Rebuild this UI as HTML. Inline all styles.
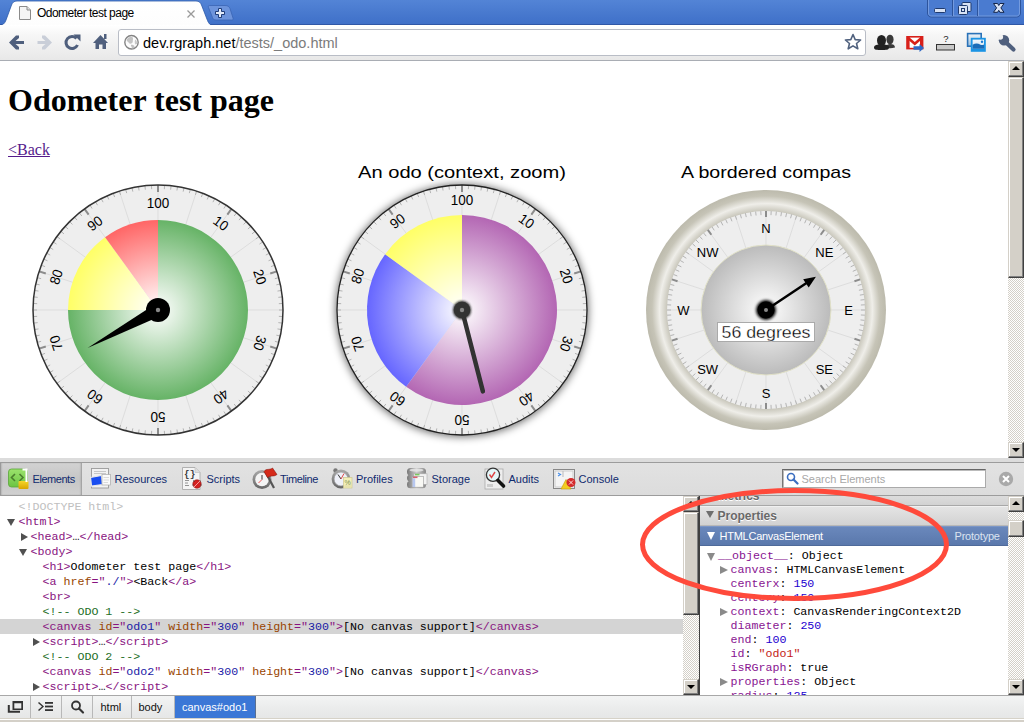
<!DOCTYPE html>
<html><head><meta charset="utf-8"><style>
*{box-sizing:border-box}
body{margin:0;width:1024px;height:722px;overflow:hidden;position:relative;background:#fff;font-family:"Liberation Sans",sans-serif}
.a{position:absolute}
.mono{font-family:"Liberation Mono",monospace}
</style></head><body>
<div class="a" style="left:0;top:0;width:1024px;height:25px;background:linear-gradient(#5384d6,#3f70c8);border-bottom:1px solid #2f57a6"></div>
<svg class="a" style="left:0;top:0" width="240" height="26" viewBox="0 0 240 26">
<defs><linearGradient id="tabg" x1="0" y1="0" x2="0" y2="1"><stop offset="0" stop-color="#fff"/><stop offset="1" stop-color="#fdfdfd"/></linearGradient></defs>
<path d="M-2,26 C3,25.5 5,23 6,20 L11.5,5 C12.5,2.5 14,1 17,1 L196,1 C199,1 200.5,2.5 201.5,5 L207.5,20.5 C208.5,23 210,25.5 214,26 Z" fill="url(#tabg)" stroke="#2a58a8" stroke-width="0.8"/>
<path d="M209.5,5.5 L225,5.5 C228,5.5 229,6.5 230,8.5 L233,18 C233.5,19.5 233,20 231.5,20 L216,20 C214,20 213,19 212.5,17.5 L208.5,7.5 C208,6 208.5,5.5 209.5,5.5 Z" fill="#6d94dc" stroke="#3a64b4" stroke-width="0.8"/>
<path d="M218.5,8.5 h3 v3 h3 v3 h-3 v3 h-3 v-3 h-3 v-3 h3 Z" fill="#e2eaf8" stroke="#1f3d78" stroke-width="1" stroke-linejoin="miter"/>
</svg>
<svg class="a" style="left:18px;top:5px" width="14" height="16" viewBox="0 0 14 16">
<path d="M1.5,1.5 H9 L12.5,5 V14.5 H1.5 Z" fill="#f4f4f4" stroke="#8a8a8a" stroke-width="1"/>
<path d="M9,1.5 V5 H12.5" fill="#e0e0e0" stroke="#8a8a8a" stroke-width="1"/>
</svg>
<div class="a" style="left:37px;top:6.3px;font-size:12px;line-height:15px;color:#000;white-space:nowrap;letter-spacing:-0.52px">Odometer test page</div>
<svg class="a" style="left:186px;top:8.5px" width="10" height="10" viewBox="0 0 10 10"><path d="M1.5,1.5 L8.5,8.5 M8.5,1.5 L1.5,8.5" stroke="#999" stroke-width="1.3"/></svg>
<svg class="a" style="left:926px;top:0" width="98" height="19" viewBox="0 0 98 19">
<path d="M1.5,-1 V13 C1.5,15.5 3,17 5.5,17 H90.5 C93,17 94.5,15.5 94.5,13 V-1" fill="#4a7bd0" stroke="#2d549c" stroke-width="1"/>
<path d="M2.5,-1 V13 C2.5,15 4,16 5.5,16 H90.5 C92,16 93.5,15 93.5,13 V-1" fill="none" stroke="#7fa3e2" stroke-width="0.8"/>
<line x1="26.5" y1="0" x2="26.5" y2="16" stroke="#2d549c"/><line x1="27.5" y1="0" x2="27.5" y2="16" stroke="#7fa3e2" stroke-width="0.8"/>
<line x1="51.5" y1="0" x2="51.5" y2="16" stroke="#2d549c"/><line x1="52.5" y1="0" x2="52.5" y2="16" stroke="#7fa3e2" stroke-width="0.8"/>
<rect x="8.5" y="8.5" width="11" height="4" rx="1" fill="#d8e2f4" stroke="#1f3a6e" stroke-width="1"/>
<rect x="36" y="2.5" width="9" height="9" rx="1" fill="#d8e2f4" stroke="#1f3a6e" stroke-width="1"/>
<rect x="32.5" y="5.5" width="9" height="9" rx="1" fill="#d8e2f4" stroke="#1f3a6e" stroke-width="1"/>
<rect x="35.5" y="8.5" width="3" height="3" fill="#d8e2f4" stroke="#1f3a6e" stroke-width="1"/>
<path d="M67.5,3.5 H71.6 L72.75,5.5 L73.9,3.5 H78 L74.9,7.9 L78,12.3 H73.9 L72.75,10.3 L71.6,12.3 H67.5 L70.6,7.9 Z" fill="#d8e2f4" stroke="#13254a" stroke-width="1" stroke-linejoin="miter"/>
</svg>
<div class="a" style="left:0;top:25px;width:1024px;height:36px;background:linear-gradient(#fff,#f6f6f6 30%,#e8e8e8);border-bottom:1px solid #a9adb4"></div>
<svg class="a" style="left:0;top:28px" width="112" height="28" viewBox="0 0 112 28">
<g fill="#4f5f7d">
<path d="M9,14.5 L16,7.5 L19,7.5 L19,10 L15.5,13 H24 V16 H15.5 L19,19 V21.5 H16 Z"/>
</g>
<g fill="#c9ced8">
<path d="M52,14.5 L45,7.5 L42,7.5 L42,10 L45.5,13 H37.5 V16 H45.5 L42,19 V21.5 H45 Z"/>
</g>
<g fill="none" stroke="#4f5f7d" stroke-width="3">
<path d="M77.5,17 A6,6 0 1 1 76.5,10.5"/>
</g>
<path d="M73.5,6.5 L80.5,6.5 L80.5,13.5 Z" fill="#4f5f7d"/>
<path d="M93,15 L100.5,7 L108,15 L106,15 L106,21 L102.5,21 L102.5,16.5 L99,16.5 L99,21 L95.5,21 L95.5,15 Z" fill="#4f5f7d"/>
<rect x="104" y="6" width="2.5" height="5" fill="#4f5f7d"/>
</svg>
<div class="a" style="left:118px;top:29px;width:748px;height:27px;background:#fff;border:1px solid #b9bdc6;border-radius:3px"></div>
<svg class="a" style="left:123px;top:34px" width="17" height="17" viewBox="0 0 17 17">
<circle cx="8.5" cy="8.25" r="6.7" fill="#fcfcfc" stroke="#848484" stroke-width="1.4"/>
<path d="M4.5,4.5 C6,3 8.5,2.8 9.8,3.5 C10.5,5 9.5,6.5 9.8,8 C9,9.5 8,10 6.5,9.5 C5.5,8.5 4.8,7.5 3.8,7 C3.6,6 3.9,5.2 4.5,4.5 Z" fill="#c4c4c4"/>
<path d="M7.8,10.8 C9,10.5 11,11 11.5,12.2 C11.2,13.5 10.5,14.5 9.5,14.8 C8.8,14 8.2,12.5 7.8,10.8 Z" fill="#c0c0c0"/>
<path d="M12.3,5.5 C13.5,6.5 14.2,8 14,9.8 C13.3,10.5 12.5,10.8 12,10 C11.8,8.5 11.5,7 12.3,5.5 Z" fill="#c8c8c8"/>
</svg>
<div class="a" style="left:143px;top:35px;font-size:14.5px;line-height:17px;white-space:nowrap;color:#000">dev.rgraph.net<span style="color:#7b7b7b">/tests/_odo.html</span></div>
<svg class="a" style="left:843px;top:32px" width="20" height="20" viewBox="0 0 20 20">
<path d="M10,2.5 L12.2,7.6 L17.6,8 L13.5,11.5 L14.8,16.8 L10,13.9 L5.2,16.8 L6.5,11.5 L2.4,8 L7.8,7.6 Z" fill="#fff" stroke="#51627f" stroke-width="1.6" stroke-linejoin="round"/>
</svg>
<svg class="a" style="left:870px;top:30px" width="154" height="26" viewBox="0 0 154 26">
<!-- people -->
<g fill="#3a3a3a">
<ellipse cx="20" cy="9.5" rx="3.6" ry="4.8"/><path d="M16,17.5 C16.5,14.5 18,14 20,14 C23,14 25,15 25,17.5 C22,18.5 18,18.5 16,17.5 Z"/>
</g>
<g fill="#222">
<ellipse cx="11.5" cy="10.5" rx="4.5" ry="5.5"/><path d="M4,17.5 C4,15 7,14.5 11.5,14.5 C16,14.5 19,15 19,17.5 C19,20 16,20 11.5,20 C7,20 4,20 4,17.5 Z"/>
</g>
<!-- gmail -->
<rect x="37" y="6.8" width="15.6" height="11.8" fill="#fff" stroke="#d8201a" stroke-width="1.6"/>
<path d="M37.5,7.5 L44.8,13.8 L52,7.5" fill="none" stroke="#d8201a" stroke-width="2.6"/>
<rect x="37" y="7" width="2.6" height="11.6" fill="#d8201a"/><rect x="50" y="7" width="2.6" height="11.6" fill="#d8201a"/>
<path d="M43.5,16.3 H49.5 V14 L54,18 L49.5,22 V19.7 H43.5 Z" fill="#2f68c4"/>
<!-- ? bar -->
<text x="76" y="12" font-family="Liberation Sans" font-size="9.5" fill="#222" text-anchor="middle">?</text>
<rect x="66.5" y="14.5" width="18" height="5.5" fill="#c8c8c8" stroke="#333" stroke-width="1"/>
<!-- picture -->
<defs><linearGradient id="picbk" x1="0" y1="0" x2="0" y2="1"><stop offset="0" stop-color="#f0f4f8"/><stop offset="1" stop-color="#9cc0dc"/></linearGradient>
<linearGradient id="picfr" x1="0" y1="0" x2="0" y2="1"><stop offset="0" stop-color="#f4f8fc"/><stop offset="1" stop-color="#c4dcee"/></linearGradient></defs>
<rect x="97.6" y="3.6" width="13.6" height="12.6" fill="url(#picbk)" stroke="#2a72b8" stroke-width="1.6"/>
<rect x="100.8" y="7.8" width="15" height="14" fill="#1c94e4"/>
<rect x="102.6" y="9.6" width="11.4" height="9.2" fill="url(#picfr)"/>
<path d="M102.6,18.8 V14.8 C105,13 108,13 110,14.5 C111.5,15.5 113,15 114,14.5 V18.8 Z" fill="#1a6cb8"/>
<circle cx="112" cy="11.8" r="1.2" fill="#1a7ad0"/>
<!-- wrench -->
<path d="M135,11.5 L143.5,19.5" stroke="#4f5f7d" stroke-width="4.2" stroke-linecap="round"/>
<circle cx="134" cy="10.2" r="5.2" fill="#4f5f7d"/>
<circle cx="130.3" cy="7" r="2.8" fill="#f3f3f3"/>
</svg>
<div class="a" style="left:1008px;top:61px;width:16px;height:397px;background:conic-gradient(#d4d0c8 25%,#fff 0 50%,#d4d0c8 0 75%,#fff 0) 0 0/2px 2px"></div>
<div class="a" style="left:1008px;top:61px;width:16px;height:16px;background:#d4d0c8;border-top:1px solid #d4d0c8;border-left:1px solid #d4d0c8;border-right:1px solid #404040;border-bottom:1px solid #404040;box-shadow:inset -1px -1px 0 #808080, inset 1px 1px 0 #fff"></div>
<div class="a" style="left:1008px;top:442px;width:16px;height:16px;background:#d4d0c8;border-top:1px solid #d4d0c8;border-left:1px solid #d4d0c8;border-right:1px solid #404040;border-bottom:1px solid #404040;box-shadow:inset -1px -1px 0 #808080, inset 1px 1px 0 #fff"></div>
<div class="a" style="left:1008px;top:77px;width:16px;height:201px;background:#d4d0c8;border-top:1px solid #d4d0c8;border-left:1px solid #d4d0c8;border-right:1px solid #404040;border-bottom:1px solid #404040;box-shadow:inset -1px -1px 0 #808080, inset 1px 1px 0 #fff"></div>
<div class="a" style="left:1011.5px;top:66px;width:0;height:0;border-left:4px solid transparent;border-right:4px solid transparent;border-bottom:4px solid #000"></div>
<div class="a" style="left:1011.5px;top:448px;width:0;height:0;border-left:4px solid transparent;border-right:4px solid transparent;border-top:4px solid #000"></div>
<div class="a" style="left:0;top:61px;width:1008px;height:397px;overflow:hidden;background:#fff">
<div class="a" style="left:8px;top:21px;font-family:'Liberation Serif',serif;font-weight:bold;font-size:32px;line-height:37px;white-space:nowrap;color:#000">Odometer test page</div>
<div class="a" style="left:8px;top:80px;font-family:'Liberation Serif',serif;font-size:16px;line-height:18px;white-space:nowrap;color:#551a8b;text-decoration:underline">&lt;Back</div>
<svg width="300" height="300" viewBox="0 0 300 300" style="position:absolute;left:8px;top:99px">
<defs>
<radialGradient id="g1g" gradientUnits="userSpaceOnUse" cx="150" cy="150" r="90"><stop offset="0" stop-color="#fff"/><stop offset="1" stop-color="#66b366"/></radialGradient>
<radialGradient id="g1y" gradientUnits="userSpaceOnUse" cx="150" cy="150" r="90"><stop offset="0" stop-color="#fff"/><stop offset="1" stop-color="#ffff66"/></radialGradient>
<radialGradient id="g1r" gradientUnits="userSpaceOnUse" cx="150" cy="150" r="90"><stop offset="0" stop-color="#fff"/><stop offset="1" stop-color="#ff6666"/></radialGradient>
</defs>
<circle cx="150" cy="150" r="125" fill="#eee"/>
<line x1="150.00" y1="150.00" x2="150.00" y2="25.00" stroke="#ddd" stroke-width="1"/>
<line x1="150.00" y1="150.00" x2="188.63" y2="31.12" stroke="#ddd" stroke-width="1"/>
<line x1="150.00" y1="150.00" x2="223.47" y2="48.87" stroke="#ddd" stroke-width="1"/>
<line x1="150.00" y1="150.00" x2="251.13" y2="76.53" stroke="#ddd" stroke-width="1"/>
<line x1="150.00" y1="150.00" x2="268.88" y2="111.37" stroke="#ddd" stroke-width="1"/>
<line x1="150.00" y1="150.00" x2="275.00" y2="150.00" stroke="#ddd" stroke-width="1"/>
<line x1="150.00" y1="150.00" x2="268.88" y2="188.63" stroke="#ddd" stroke-width="1"/>
<line x1="150.00" y1="150.00" x2="251.13" y2="223.47" stroke="#ddd" stroke-width="1"/>
<line x1="150.00" y1="150.00" x2="223.47" y2="251.13" stroke="#ddd" stroke-width="1"/>
<line x1="150.00" y1="150.00" x2="188.63" y2="268.88" stroke="#ddd" stroke-width="1"/>
<line x1="150.00" y1="150.00" x2="150.00" y2="275.00" stroke="#ddd" stroke-width="1"/>
<line x1="150.00" y1="150.00" x2="111.37" y2="268.88" stroke="#ddd" stroke-width="1"/>
<line x1="150.00" y1="150.00" x2="76.53" y2="251.13" stroke="#ddd" stroke-width="1"/>
<line x1="150.00" y1="150.00" x2="48.87" y2="223.47" stroke="#ddd" stroke-width="1"/>
<line x1="150.00" y1="150.00" x2="31.12" y2="188.63" stroke="#ddd" stroke-width="1"/>
<line x1="150.00" y1="150.00" x2="25.00" y2="150.00" stroke="#ddd" stroke-width="1"/>
<line x1="150.00" y1="150.00" x2="31.12" y2="111.37" stroke="#ddd" stroke-width="1"/>
<line x1="150.00" y1="150.00" x2="48.87" y2="76.53" stroke="#ddd" stroke-width="1"/>
<line x1="150.00" y1="150.00" x2="76.53" y2="48.87" stroke="#ddd" stroke-width="1"/>
<line x1="150.00" y1="150.00" x2="111.37" y2="31.12" stroke="#ddd" stroke-width="1"/>
<line x1="156.33" y1="29.17" x2="156.54" y2="25.17" stroke="#b4b4b4" stroke-width="1"/>
<line x1="162.65" y1="29.66" x2="163.07" y2="25.68" stroke="#b4b4b4" stroke-width="1"/>
<line x1="168.93" y1="30.49" x2="169.55" y2="26.54" stroke="#b4b4b4" stroke-width="1"/>
<line x1="175.16" y1="31.64" x2="175.99" y2="27.73" stroke="#b4b4b4" stroke-width="1"/>
<line x1="181.32" y1="33.12" x2="182.35" y2="29.26" stroke="#b4b4b4" stroke-width="1"/>
<line x1="187.39" y1="34.92" x2="188.63" y2="31.12" stroke="#b4b4b4" stroke-width="1"/>
<line x1="193.36" y1="37.04" x2="194.80" y2="33.30" stroke="#b4b4b4" stroke-width="1"/>
<line x1="199.22" y1="39.46" x2="200.84" y2="35.81" stroke="#b4b4b4" stroke-width="1"/>
<line x1="204.93" y1="42.19" x2="206.75" y2="38.62" stroke="#b4b4b4" stroke-width="1"/>
<line x1="210.50" y1="45.21" x2="212.50" y2="41.75" stroke="#b4b4b4" stroke-width="1"/>
<line x1="215.90" y1="48.52" x2="218.08" y2="45.17" stroke="#b4b4b4" stroke-width="1"/>
<line x1="226.15" y1="55.97" x2="228.67" y2="52.86" stroke="#b4b4b4" stroke-width="1"/>
<line x1="230.96" y1="60.08" x2="233.64" y2="57.11" stroke="#b4b4b4" stroke-width="1"/>
<line x1="235.56" y1="64.44" x2="238.39" y2="61.61" stroke="#b4b4b4" stroke-width="1"/>
<line x1="239.92" y1="69.04" x2="242.89" y2="66.36" stroke="#b4b4b4" stroke-width="1"/>
<line x1="244.03" y1="73.85" x2="247.14" y2="71.33" stroke="#b4b4b4" stroke-width="1"/>
<line x1="247.89" y1="78.88" x2="251.13" y2="76.53" stroke="#b4b4b4" stroke-width="1"/>
<line x1="251.48" y1="84.10" x2="254.83" y2="81.92" stroke="#b4b4b4" stroke-width="1"/>
<line x1="254.79" y1="89.50" x2="258.25" y2="87.50" stroke="#b4b4b4" stroke-width="1"/>
<line x1="257.81" y1="95.07" x2="261.38" y2="93.25" stroke="#b4b4b4" stroke-width="1"/>
<line x1="260.54" y1="100.78" x2="264.19" y2="99.16" stroke="#b4b4b4" stroke-width="1"/>
<line x1="262.96" y1="106.64" x2="266.70" y2="105.20" stroke="#b4b4b4" stroke-width="1"/>
<line x1="266.88" y1="118.68" x2="270.74" y2="117.65" stroke="#b4b4b4" stroke-width="1"/>
<line x1="268.36" y1="124.84" x2="272.27" y2="124.01" stroke="#b4b4b4" stroke-width="1"/>
<line x1="269.51" y1="131.07" x2="273.46" y2="130.45" stroke="#b4b4b4" stroke-width="1"/>
<line x1="270.34" y1="137.35" x2="274.32" y2="136.93" stroke="#b4b4b4" stroke-width="1"/>
<line x1="270.83" y1="143.67" x2="274.83" y2="143.46" stroke="#b4b4b4" stroke-width="1"/>
<line x1="271.00" y1="150.00" x2="275.00" y2="150.00" stroke="#b4b4b4" stroke-width="1"/>
<line x1="270.83" y1="156.33" x2="274.83" y2="156.54" stroke="#b4b4b4" stroke-width="1"/>
<line x1="270.34" y1="162.65" x2="274.32" y2="163.07" stroke="#b4b4b4" stroke-width="1"/>
<line x1="269.51" y1="168.93" x2="273.46" y2="169.55" stroke="#b4b4b4" stroke-width="1"/>
<line x1="268.36" y1="175.16" x2="272.27" y2="175.99" stroke="#b4b4b4" stroke-width="1"/>
<line x1="266.88" y1="181.32" x2="270.74" y2="182.35" stroke="#b4b4b4" stroke-width="1"/>
<line x1="262.96" y1="193.36" x2="266.70" y2="194.80" stroke="#b4b4b4" stroke-width="1"/>
<line x1="260.54" y1="199.22" x2="264.19" y2="200.84" stroke="#b4b4b4" stroke-width="1"/>
<line x1="257.81" y1="204.93" x2="261.38" y2="206.75" stroke="#b4b4b4" stroke-width="1"/>
<line x1="254.79" y1="210.50" x2="258.25" y2="212.50" stroke="#b4b4b4" stroke-width="1"/>
<line x1="251.48" y1="215.90" x2="254.83" y2="218.08" stroke="#b4b4b4" stroke-width="1"/>
<line x1="247.89" y1="221.12" x2="251.13" y2="223.47" stroke="#b4b4b4" stroke-width="1"/>
<line x1="244.03" y1="226.15" x2="247.14" y2="228.67" stroke="#b4b4b4" stroke-width="1"/>
<line x1="239.92" y1="230.96" x2="242.89" y2="233.64" stroke="#b4b4b4" stroke-width="1"/>
<line x1="235.56" y1="235.56" x2="238.39" y2="238.39" stroke="#b4b4b4" stroke-width="1"/>
<line x1="230.96" y1="239.92" x2="233.64" y2="242.89" stroke="#b4b4b4" stroke-width="1"/>
<line x1="226.15" y1="244.03" x2="228.67" y2="247.14" stroke="#b4b4b4" stroke-width="1"/>
<line x1="215.90" y1="251.48" x2="218.08" y2="254.83" stroke="#b4b4b4" stroke-width="1"/>
<line x1="210.50" y1="254.79" x2="212.50" y2="258.25" stroke="#b4b4b4" stroke-width="1"/>
<line x1="204.93" y1="257.81" x2="206.75" y2="261.38" stroke="#b4b4b4" stroke-width="1"/>
<line x1="199.22" y1="260.54" x2="200.84" y2="264.19" stroke="#b4b4b4" stroke-width="1"/>
<line x1="193.36" y1="262.96" x2="194.80" y2="266.70" stroke="#b4b4b4" stroke-width="1"/>
<line x1="187.39" y1="265.08" x2="188.63" y2="268.88" stroke="#b4b4b4" stroke-width="1"/>
<line x1="181.32" y1="266.88" x2="182.35" y2="270.74" stroke="#b4b4b4" stroke-width="1"/>
<line x1="175.16" y1="268.36" x2="175.99" y2="272.27" stroke="#b4b4b4" stroke-width="1"/>
<line x1="168.93" y1="269.51" x2="169.55" y2="273.46" stroke="#b4b4b4" stroke-width="1"/>
<line x1="162.65" y1="270.34" x2="163.07" y2="274.32" stroke="#b4b4b4" stroke-width="1"/>
<line x1="156.33" y1="270.83" x2="156.54" y2="274.83" stroke="#b4b4b4" stroke-width="1"/>
<line x1="143.67" y1="270.83" x2="143.46" y2="274.83" stroke="#b4b4b4" stroke-width="1"/>
<line x1="137.35" y1="270.34" x2="136.93" y2="274.32" stroke="#b4b4b4" stroke-width="1"/>
<line x1="131.07" y1="269.51" x2="130.45" y2="273.46" stroke="#b4b4b4" stroke-width="1"/>
<line x1="124.84" y1="268.36" x2="124.01" y2="272.27" stroke="#b4b4b4" stroke-width="1"/>
<line x1="118.68" y1="266.88" x2="117.65" y2="270.74" stroke="#b4b4b4" stroke-width="1"/>
<line x1="112.61" y1="265.08" x2="111.37" y2="268.88" stroke="#b4b4b4" stroke-width="1"/>
<line x1="106.64" y1="262.96" x2="105.20" y2="266.70" stroke="#b4b4b4" stroke-width="1"/>
<line x1="100.78" y1="260.54" x2="99.16" y2="264.19" stroke="#b4b4b4" stroke-width="1"/>
<line x1="95.07" y1="257.81" x2="93.25" y2="261.38" stroke="#b4b4b4" stroke-width="1"/>
<line x1="89.50" y1="254.79" x2="87.50" y2="258.25" stroke="#b4b4b4" stroke-width="1"/>
<line x1="84.10" y1="251.48" x2="81.92" y2="254.83" stroke="#b4b4b4" stroke-width="1"/>
<line x1="73.85" y1="244.03" x2="71.33" y2="247.14" stroke="#b4b4b4" stroke-width="1"/>
<line x1="69.04" y1="239.92" x2="66.36" y2="242.89" stroke="#b4b4b4" stroke-width="1"/>
<line x1="64.44" y1="235.56" x2="61.61" y2="238.39" stroke="#b4b4b4" stroke-width="1"/>
<line x1="60.08" y1="230.96" x2="57.11" y2="233.64" stroke="#b4b4b4" stroke-width="1"/>
<line x1="55.97" y1="226.15" x2="52.86" y2="228.67" stroke="#b4b4b4" stroke-width="1"/>
<line x1="52.11" y1="221.12" x2="48.87" y2="223.47" stroke="#b4b4b4" stroke-width="1"/>
<line x1="48.52" y1="215.90" x2="45.17" y2="218.08" stroke="#b4b4b4" stroke-width="1"/>
<line x1="45.21" y1="210.50" x2="41.75" y2="212.50" stroke="#b4b4b4" stroke-width="1"/>
<line x1="42.19" y1="204.93" x2="38.62" y2="206.75" stroke="#b4b4b4" stroke-width="1"/>
<line x1="39.46" y1="199.22" x2="35.81" y2="200.84" stroke="#b4b4b4" stroke-width="1"/>
<line x1="37.04" y1="193.36" x2="33.30" y2="194.80" stroke="#b4b4b4" stroke-width="1"/>
<line x1="33.12" y1="181.32" x2="29.26" y2="182.35" stroke="#b4b4b4" stroke-width="1"/>
<line x1="31.64" y1="175.16" x2="27.73" y2="175.99" stroke="#b4b4b4" stroke-width="1"/>
<line x1="30.49" y1="168.93" x2="26.54" y2="169.55" stroke="#b4b4b4" stroke-width="1"/>
<line x1="29.66" y1="162.65" x2="25.68" y2="163.07" stroke="#b4b4b4" stroke-width="1"/>
<line x1="29.17" y1="156.33" x2="25.17" y2="156.54" stroke="#b4b4b4" stroke-width="1"/>
<line x1="29.00" y1="150.00" x2="25.00" y2="150.00" stroke="#b4b4b4" stroke-width="1"/>
<line x1="29.17" y1="143.67" x2="25.17" y2="143.46" stroke="#b4b4b4" stroke-width="1"/>
<line x1="29.66" y1="137.35" x2="25.68" y2="136.93" stroke="#b4b4b4" stroke-width="1"/>
<line x1="30.49" y1="131.07" x2="26.54" y2="130.45" stroke="#b4b4b4" stroke-width="1"/>
<line x1="31.64" y1="124.84" x2="27.73" y2="124.01" stroke="#b4b4b4" stroke-width="1"/>
<line x1="33.12" y1="118.68" x2="29.26" y2="117.65" stroke="#b4b4b4" stroke-width="1"/>
<line x1="37.04" y1="106.64" x2="33.30" y2="105.20" stroke="#b4b4b4" stroke-width="1"/>
<line x1="39.46" y1="100.78" x2="35.81" y2="99.16" stroke="#b4b4b4" stroke-width="1"/>
<line x1="42.19" y1="95.07" x2="38.62" y2="93.25" stroke="#b4b4b4" stroke-width="1"/>
<line x1="45.21" y1="89.50" x2="41.75" y2="87.50" stroke="#b4b4b4" stroke-width="1"/>
<line x1="48.52" y1="84.10" x2="45.17" y2="81.92" stroke="#b4b4b4" stroke-width="1"/>
<line x1="52.11" y1="78.88" x2="48.87" y2="76.53" stroke="#b4b4b4" stroke-width="1"/>
<line x1="55.97" y1="73.85" x2="52.86" y2="71.33" stroke="#b4b4b4" stroke-width="1"/>
<line x1="60.08" y1="69.04" x2="57.11" y2="66.36" stroke="#b4b4b4" stroke-width="1"/>
<line x1="64.44" y1="64.44" x2="61.61" y2="61.61" stroke="#b4b4b4" stroke-width="1"/>
<line x1="69.04" y1="60.08" x2="66.36" y2="57.11" stroke="#b4b4b4" stroke-width="1"/>
<line x1="73.85" y1="55.97" x2="71.33" y2="52.86" stroke="#b4b4b4" stroke-width="1"/>
<line x1="84.10" y1="48.52" x2="81.92" y2="45.17" stroke="#b4b4b4" stroke-width="1"/>
<line x1="89.50" y1="45.21" x2="87.50" y2="41.75" stroke="#b4b4b4" stroke-width="1"/>
<line x1="95.07" y1="42.19" x2="93.25" y2="38.62" stroke="#b4b4b4" stroke-width="1"/>
<line x1="100.78" y1="39.46" x2="99.16" y2="35.81" stroke="#b4b4b4" stroke-width="1"/>
<line x1="106.64" y1="37.04" x2="105.20" y2="33.30" stroke="#b4b4b4" stroke-width="1"/>
<line x1="112.61" y1="34.92" x2="111.37" y2="31.12" stroke="#b4b4b4" stroke-width="1"/>
<line x1="118.68" y1="33.12" x2="117.65" y2="29.26" stroke="#b4b4b4" stroke-width="1"/>
<line x1="124.84" y1="31.64" x2="124.01" y2="27.73" stroke="#b4b4b4" stroke-width="1"/>
<line x1="131.07" y1="30.49" x2="130.45" y2="26.54" stroke="#b4b4b4" stroke-width="1"/>
<line x1="137.35" y1="29.66" x2="136.93" y2="25.68" stroke="#b4b4b4" stroke-width="1"/>
<line x1="143.67" y1="29.17" x2="143.46" y2="25.17" stroke="#b4b4b4" stroke-width="1"/>
<line x1="150.00" y1="32.00" x2="150.00" y2="25.00" stroke="#8c8c8c" stroke-width="2"/>
<line x1="219.36" y1="54.54" x2="223.47" y2="48.87" stroke="#8c8c8c" stroke-width="2"/>
<line x1="262.22" y1="113.54" x2="268.88" y2="111.37" stroke="#8c8c8c" stroke-width="2"/>
<line x1="262.22" y1="186.46" x2="268.88" y2="188.63" stroke="#8c8c8c" stroke-width="2"/>
<line x1="219.36" y1="245.46" x2="223.47" y2="251.13" stroke="#8c8c8c" stroke-width="2"/>
<line x1="150.00" y1="268.00" x2="150.00" y2="275.00" stroke="#8c8c8c" stroke-width="2"/>
<line x1="80.64" y1="245.46" x2="76.53" y2="251.13" stroke="#8c8c8c" stroke-width="2"/>
<line x1="37.78" y1="186.46" x2="31.12" y2="188.63" stroke="#8c8c8c" stroke-width="2"/>
<line x1="37.78" y1="113.54" x2="31.12" y2="111.37" stroke="#8c8c8c" stroke-width="2"/>
<line x1="80.64" y1="54.54" x2="76.53" y2="48.87" stroke="#8c8c8c" stroke-width="2"/>
<path d="M150.00,150.00 L150.00,60.00 A90,90 0 1 1 60.00,150.00 Z" fill="url(#g1g)"/>
<path d="M150.00,150.00 L60.00,150.00 A90,90 0 0 1 97.10,77.19 Z" fill="url(#g1y)"/>
<path d="M150.00,150.00 L97.10,77.19 A90,90 0 0 1 150.00,60.00 Z" fill="url(#g1r)"/>
<circle cx="150" cy="150" r="125" fill="none" stroke="#333" stroke-width="1.5"/>
<g font-family="Liberation Sans" fill="#000"><text x="212.89" y="63.44" transform="rotate(36 212.89 63.44)" font-size="14" text-anchor="middle" dy="4.7" textLength="15.0" lengthAdjust="spacingAndGlyphs">10</text>
<text x="251.76" y="116.94" transform="rotate(72 251.76 116.94)" font-size="14" text-anchor="middle" dy="4.7" textLength="15.0" lengthAdjust="spacingAndGlyphs">20</text>
<text x="251.76" y="183.06" transform="rotate(108 251.76 183.06)" font-size="14" text-anchor="middle" dy="4.7" textLength="15.0" lengthAdjust="spacingAndGlyphs">30</text>
<text x="212.89" y="236.56" transform="rotate(144 212.89 236.56)" font-size="14" text-anchor="middle" dy="4.7" textLength="15.0" lengthAdjust="spacingAndGlyphs">40</text>
<text x="150.00" y="257.00" transform="rotate(180 150.00 257.00)" font-size="14" text-anchor="middle" dy="4.7" textLength="15.0" lengthAdjust="spacingAndGlyphs">50</text>
<text x="87.11" y="236.56" transform="rotate(216 87.11 236.56)" font-size="14" text-anchor="middle" dy="4.7" textLength="15.0" lengthAdjust="spacingAndGlyphs">60</text>
<text x="48.24" y="183.06" transform="rotate(252 48.24 183.06)" font-size="14" text-anchor="middle" dy="4.7" textLength="15.0" lengthAdjust="spacingAndGlyphs">70</text>
<text x="48.24" y="116.94" transform="rotate(288 48.24 116.94)" font-size="14" text-anchor="middle" dy="4.7" textLength="15.0" lengthAdjust="spacingAndGlyphs">80</text>
<text x="87.11" y="63.44" transform="rotate(324 87.11 63.44)" font-size="14" text-anchor="middle" dy="4.7" textLength="15.0" lengthAdjust="spacingAndGlyphs">90</text>
<text x="150.00" y="43.00" transform="rotate(360 150.00 43.00)" font-size="14" text-anchor="middle" dy="4.7" textLength="22.5" lengthAdjust="spacingAndGlyphs">100</text></g>
<path d="M146.92,144.28 L79.56,187.93 L153.08,155.72 Z" fill="#000"/>
<circle cx="150" cy="150" r="12" fill="#000"/>
<circle cx="150" cy="150" r="2.2" fill="#888"/>
</svg>
<svg width="300" height="300" viewBox="0 0 300 300" style="position:absolute;left:312px;top:99px">
<defs>
<radialGradient id="g2p" gradientUnits="userSpaceOnUse" cx="150" cy="150" r="95"><stop offset="0" stop-color="#fff"/><stop offset="1" stop-color="#b366b3"/></radialGradient>
<radialGradient id="g2b" gradientUnits="userSpaceOnUse" cx="150" cy="150" r="95"><stop offset="0" stop-color="#fff"/><stop offset="1" stop-color="#6666ff"/></radialGradient>
<radialGradient id="g2y" gradientUnits="userSpaceOnUse" cx="150" cy="150" r="95"><stop offset="0" stop-color="#fff"/><stop offset="1" stop-color="#ffff66"/></radialGradient>
<filter id="sh2" x="-20%" y="-20%" width="140%" height="140%"><feGaussianBlur stdDeviation="4"/></filter>
<filter id="sh2b" x="-50%" y="-50%" width="200%" height="200%"><feGaussianBlur stdDeviation="1.2"/></filter>
</defs>
<text x="150" y="18" font-family="Liberation Sans" font-size="17" text-anchor="middle" textLength="208" lengthAdjust="spacingAndGlyphs">An odo (context, zoom)</text>
<circle cx="150" cy="150.5" r="126" fill="#000" fill-opacity="0.62" filter="url(#sh2)"/>
<circle cx="150" cy="150" r="125" fill="#eee"/>
<line x1="150.00" y1="150.00" x2="150.00" y2="25.00" stroke="#ddd" stroke-width="1"/>
<line x1="150.00" y1="150.00" x2="188.63" y2="31.12" stroke="#ddd" stroke-width="1"/>
<line x1="150.00" y1="150.00" x2="223.47" y2="48.87" stroke="#ddd" stroke-width="1"/>
<line x1="150.00" y1="150.00" x2="251.13" y2="76.53" stroke="#ddd" stroke-width="1"/>
<line x1="150.00" y1="150.00" x2="268.88" y2="111.37" stroke="#ddd" stroke-width="1"/>
<line x1="150.00" y1="150.00" x2="275.00" y2="150.00" stroke="#ddd" stroke-width="1"/>
<line x1="150.00" y1="150.00" x2="268.88" y2="188.63" stroke="#ddd" stroke-width="1"/>
<line x1="150.00" y1="150.00" x2="251.13" y2="223.47" stroke="#ddd" stroke-width="1"/>
<line x1="150.00" y1="150.00" x2="223.47" y2="251.13" stroke="#ddd" stroke-width="1"/>
<line x1="150.00" y1="150.00" x2="188.63" y2="268.88" stroke="#ddd" stroke-width="1"/>
<line x1="150.00" y1="150.00" x2="150.00" y2="275.00" stroke="#ddd" stroke-width="1"/>
<line x1="150.00" y1="150.00" x2="111.37" y2="268.88" stroke="#ddd" stroke-width="1"/>
<line x1="150.00" y1="150.00" x2="76.53" y2="251.13" stroke="#ddd" stroke-width="1"/>
<line x1="150.00" y1="150.00" x2="48.87" y2="223.47" stroke="#ddd" stroke-width="1"/>
<line x1="150.00" y1="150.00" x2="31.12" y2="188.63" stroke="#ddd" stroke-width="1"/>
<line x1="150.00" y1="150.00" x2="25.00" y2="150.00" stroke="#ddd" stroke-width="1"/>
<line x1="150.00" y1="150.00" x2="31.12" y2="111.37" stroke="#ddd" stroke-width="1"/>
<line x1="150.00" y1="150.00" x2="48.87" y2="76.53" stroke="#ddd" stroke-width="1"/>
<line x1="150.00" y1="150.00" x2="76.53" y2="48.87" stroke="#ddd" stroke-width="1"/>
<line x1="150.00" y1="150.00" x2="111.37" y2="31.12" stroke="#ddd" stroke-width="1"/>
<line x1="156.33" y1="29.17" x2="156.54" y2="25.17" stroke="#b4b4b4" stroke-width="1"/>
<line x1="162.65" y1="29.66" x2="163.07" y2="25.68" stroke="#b4b4b4" stroke-width="1"/>
<line x1="168.93" y1="30.49" x2="169.55" y2="26.54" stroke="#b4b4b4" stroke-width="1"/>
<line x1="175.16" y1="31.64" x2="175.99" y2="27.73" stroke="#b4b4b4" stroke-width="1"/>
<line x1="181.32" y1="33.12" x2="182.35" y2="29.26" stroke="#b4b4b4" stroke-width="1"/>
<line x1="187.39" y1="34.92" x2="188.63" y2="31.12" stroke="#b4b4b4" stroke-width="1"/>
<line x1="193.36" y1="37.04" x2="194.80" y2="33.30" stroke="#b4b4b4" stroke-width="1"/>
<line x1="199.22" y1="39.46" x2="200.84" y2="35.81" stroke="#b4b4b4" stroke-width="1"/>
<line x1="204.93" y1="42.19" x2="206.75" y2="38.62" stroke="#b4b4b4" stroke-width="1"/>
<line x1="210.50" y1="45.21" x2="212.50" y2="41.75" stroke="#b4b4b4" stroke-width="1"/>
<line x1="215.90" y1="48.52" x2="218.08" y2="45.17" stroke="#b4b4b4" stroke-width="1"/>
<line x1="226.15" y1="55.97" x2="228.67" y2="52.86" stroke="#b4b4b4" stroke-width="1"/>
<line x1="230.96" y1="60.08" x2="233.64" y2="57.11" stroke="#b4b4b4" stroke-width="1"/>
<line x1="235.56" y1="64.44" x2="238.39" y2="61.61" stroke="#b4b4b4" stroke-width="1"/>
<line x1="239.92" y1="69.04" x2="242.89" y2="66.36" stroke="#b4b4b4" stroke-width="1"/>
<line x1="244.03" y1="73.85" x2="247.14" y2="71.33" stroke="#b4b4b4" stroke-width="1"/>
<line x1="247.89" y1="78.88" x2="251.13" y2="76.53" stroke="#b4b4b4" stroke-width="1"/>
<line x1="251.48" y1="84.10" x2="254.83" y2="81.92" stroke="#b4b4b4" stroke-width="1"/>
<line x1="254.79" y1="89.50" x2="258.25" y2="87.50" stroke="#b4b4b4" stroke-width="1"/>
<line x1="257.81" y1="95.07" x2="261.38" y2="93.25" stroke="#b4b4b4" stroke-width="1"/>
<line x1="260.54" y1="100.78" x2="264.19" y2="99.16" stroke="#b4b4b4" stroke-width="1"/>
<line x1="262.96" y1="106.64" x2="266.70" y2="105.20" stroke="#b4b4b4" stroke-width="1"/>
<line x1="266.88" y1="118.68" x2="270.74" y2="117.65" stroke="#b4b4b4" stroke-width="1"/>
<line x1="268.36" y1="124.84" x2="272.27" y2="124.01" stroke="#b4b4b4" stroke-width="1"/>
<line x1="269.51" y1="131.07" x2="273.46" y2="130.45" stroke="#b4b4b4" stroke-width="1"/>
<line x1="270.34" y1="137.35" x2="274.32" y2="136.93" stroke="#b4b4b4" stroke-width="1"/>
<line x1="270.83" y1="143.67" x2="274.83" y2="143.46" stroke="#b4b4b4" stroke-width="1"/>
<line x1="271.00" y1="150.00" x2="275.00" y2="150.00" stroke="#b4b4b4" stroke-width="1"/>
<line x1="270.83" y1="156.33" x2="274.83" y2="156.54" stroke="#b4b4b4" stroke-width="1"/>
<line x1="270.34" y1="162.65" x2="274.32" y2="163.07" stroke="#b4b4b4" stroke-width="1"/>
<line x1="269.51" y1="168.93" x2="273.46" y2="169.55" stroke="#b4b4b4" stroke-width="1"/>
<line x1="268.36" y1="175.16" x2="272.27" y2="175.99" stroke="#b4b4b4" stroke-width="1"/>
<line x1="266.88" y1="181.32" x2="270.74" y2="182.35" stroke="#b4b4b4" stroke-width="1"/>
<line x1="262.96" y1="193.36" x2="266.70" y2="194.80" stroke="#b4b4b4" stroke-width="1"/>
<line x1="260.54" y1="199.22" x2="264.19" y2="200.84" stroke="#b4b4b4" stroke-width="1"/>
<line x1="257.81" y1="204.93" x2="261.38" y2="206.75" stroke="#b4b4b4" stroke-width="1"/>
<line x1="254.79" y1="210.50" x2="258.25" y2="212.50" stroke="#b4b4b4" stroke-width="1"/>
<line x1="251.48" y1="215.90" x2="254.83" y2="218.08" stroke="#b4b4b4" stroke-width="1"/>
<line x1="247.89" y1="221.12" x2="251.13" y2="223.47" stroke="#b4b4b4" stroke-width="1"/>
<line x1="244.03" y1="226.15" x2="247.14" y2="228.67" stroke="#b4b4b4" stroke-width="1"/>
<line x1="239.92" y1="230.96" x2="242.89" y2="233.64" stroke="#b4b4b4" stroke-width="1"/>
<line x1="235.56" y1="235.56" x2="238.39" y2="238.39" stroke="#b4b4b4" stroke-width="1"/>
<line x1="230.96" y1="239.92" x2="233.64" y2="242.89" stroke="#b4b4b4" stroke-width="1"/>
<line x1="226.15" y1="244.03" x2="228.67" y2="247.14" stroke="#b4b4b4" stroke-width="1"/>
<line x1="215.90" y1="251.48" x2="218.08" y2="254.83" stroke="#b4b4b4" stroke-width="1"/>
<line x1="210.50" y1="254.79" x2="212.50" y2="258.25" stroke="#b4b4b4" stroke-width="1"/>
<line x1="204.93" y1="257.81" x2="206.75" y2="261.38" stroke="#b4b4b4" stroke-width="1"/>
<line x1="199.22" y1="260.54" x2="200.84" y2="264.19" stroke="#b4b4b4" stroke-width="1"/>
<line x1="193.36" y1="262.96" x2="194.80" y2="266.70" stroke="#b4b4b4" stroke-width="1"/>
<line x1="187.39" y1="265.08" x2="188.63" y2="268.88" stroke="#b4b4b4" stroke-width="1"/>
<line x1="181.32" y1="266.88" x2="182.35" y2="270.74" stroke="#b4b4b4" stroke-width="1"/>
<line x1="175.16" y1="268.36" x2="175.99" y2="272.27" stroke="#b4b4b4" stroke-width="1"/>
<line x1="168.93" y1="269.51" x2="169.55" y2="273.46" stroke="#b4b4b4" stroke-width="1"/>
<line x1="162.65" y1="270.34" x2="163.07" y2="274.32" stroke="#b4b4b4" stroke-width="1"/>
<line x1="156.33" y1="270.83" x2="156.54" y2="274.83" stroke="#b4b4b4" stroke-width="1"/>
<line x1="143.67" y1="270.83" x2="143.46" y2="274.83" stroke="#b4b4b4" stroke-width="1"/>
<line x1="137.35" y1="270.34" x2="136.93" y2="274.32" stroke="#b4b4b4" stroke-width="1"/>
<line x1="131.07" y1="269.51" x2="130.45" y2="273.46" stroke="#b4b4b4" stroke-width="1"/>
<line x1="124.84" y1="268.36" x2="124.01" y2="272.27" stroke="#b4b4b4" stroke-width="1"/>
<line x1="118.68" y1="266.88" x2="117.65" y2="270.74" stroke="#b4b4b4" stroke-width="1"/>
<line x1="112.61" y1="265.08" x2="111.37" y2="268.88" stroke="#b4b4b4" stroke-width="1"/>
<line x1="106.64" y1="262.96" x2="105.20" y2="266.70" stroke="#b4b4b4" stroke-width="1"/>
<line x1="100.78" y1="260.54" x2="99.16" y2="264.19" stroke="#b4b4b4" stroke-width="1"/>
<line x1="95.07" y1="257.81" x2="93.25" y2="261.38" stroke="#b4b4b4" stroke-width="1"/>
<line x1="89.50" y1="254.79" x2="87.50" y2="258.25" stroke="#b4b4b4" stroke-width="1"/>
<line x1="84.10" y1="251.48" x2="81.92" y2="254.83" stroke="#b4b4b4" stroke-width="1"/>
<line x1="73.85" y1="244.03" x2="71.33" y2="247.14" stroke="#b4b4b4" stroke-width="1"/>
<line x1="69.04" y1="239.92" x2="66.36" y2="242.89" stroke="#b4b4b4" stroke-width="1"/>
<line x1="64.44" y1="235.56" x2="61.61" y2="238.39" stroke="#b4b4b4" stroke-width="1"/>
<line x1="60.08" y1="230.96" x2="57.11" y2="233.64" stroke="#b4b4b4" stroke-width="1"/>
<line x1="55.97" y1="226.15" x2="52.86" y2="228.67" stroke="#b4b4b4" stroke-width="1"/>
<line x1="52.11" y1="221.12" x2="48.87" y2="223.47" stroke="#b4b4b4" stroke-width="1"/>
<line x1="48.52" y1="215.90" x2="45.17" y2="218.08" stroke="#b4b4b4" stroke-width="1"/>
<line x1="45.21" y1="210.50" x2="41.75" y2="212.50" stroke="#b4b4b4" stroke-width="1"/>
<line x1="42.19" y1="204.93" x2="38.62" y2="206.75" stroke="#b4b4b4" stroke-width="1"/>
<line x1="39.46" y1="199.22" x2="35.81" y2="200.84" stroke="#b4b4b4" stroke-width="1"/>
<line x1="37.04" y1="193.36" x2="33.30" y2="194.80" stroke="#b4b4b4" stroke-width="1"/>
<line x1="33.12" y1="181.32" x2="29.26" y2="182.35" stroke="#b4b4b4" stroke-width="1"/>
<line x1="31.64" y1="175.16" x2="27.73" y2="175.99" stroke="#b4b4b4" stroke-width="1"/>
<line x1="30.49" y1="168.93" x2="26.54" y2="169.55" stroke="#b4b4b4" stroke-width="1"/>
<line x1="29.66" y1="162.65" x2="25.68" y2="163.07" stroke="#b4b4b4" stroke-width="1"/>
<line x1="29.17" y1="156.33" x2="25.17" y2="156.54" stroke="#b4b4b4" stroke-width="1"/>
<line x1="29.00" y1="150.00" x2="25.00" y2="150.00" stroke="#b4b4b4" stroke-width="1"/>
<line x1="29.17" y1="143.67" x2="25.17" y2="143.46" stroke="#b4b4b4" stroke-width="1"/>
<line x1="29.66" y1="137.35" x2="25.68" y2="136.93" stroke="#b4b4b4" stroke-width="1"/>
<line x1="30.49" y1="131.07" x2="26.54" y2="130.45" stroke="#b4b4b4" stroke-width="1"/>
<line x1="31.64" y1="124.84" x2="27.73" y2="124.01" stroke="#b4b4b4" stroke-width="1"/>
<line x1="33.12" y1="118.68" x2="29.26" y2="117.65" stroke="#b4b4b4" stroke-width="1"/>
<line x1="37.04" y1="106.64" x2="33.30" y2="105.20" stroke="#b4b4b4" stroke-width="1"/>
<line x1="39.46" y1="100.78" x2="35.81" y2="99.16" stroke="#b4b4b4" stroke-width="1"/>
<line x1="42.19" y1="95.07" x2="38.62" y2="93.25" stroke="#b4b4b4" stroke-width="1"/>
<line x1="45.21" y1="89.50" x2="41.75" y2="87.50" stroke="#b4b4b4" stroke-width="1"/>
<line x1="48.52" y1="84.10" x2="45.17" y2="81.92" stroke="#b4b4b4" stroke-width="1"/>
<line x1="52.11" y1="78.88" x2="48.87" y2="76.53" stroke="#b4b4b4" stroke-width="1"/>
<line x1="55.97" y1="73.85" x2="52.86" y2="71.33" stroke="#b4b4b4" stroke-width="1"/>
<line x1="60.08" y1="69.04" x2="57.11" y2="66.36" stroke="#b4b4b4" stroke-width="1"/>
<line x1="64.44" y1="64.44" x2="61.61" y2="61.61" stroke="#b4b4b4" stroke-width="1"/>
<line x1="69.04" y1="60.08" x2="66.36" y2="57.11" stroke="#b4b4b4" stroke-width="1"/>
<line x1="73.85" y1="55.97" x2="71.33" y2="52.86" stroke="#b4b4b4" stroke-width="1"/>
<line x1="84.10" y1="48.52" x2="81.92" y2="45.17" stroke="#b4b4b4" stroke-width="1"/>
<line x1="89.50" y1="45.21" x2="87.50" y2="41.75" stroke="#b4b4b4" stroke-width="1"/>
<line x1="95.07" y1="42.19" x2="93.25" y2="38.62" stroke="#b4b4b4" stroke-width="1"/>
<line x1="100.78" y1="39.46" x2="99.16" y2="35.81" stroke="#b4b4b4" stroke-width="1"/>
<line x1="106.64" y1="37.04" x2="105.20" y2="33.30" stroke="#b4b4b4" stroke-width="1"/>
<line x1="112.61" y1="34.92" x2="111.37" y2="31.12" stroke="#b4b4b4" stroke-width="1"/>
<line x1="118.68" y1="33.12" x2="117.65" y2="29.26" stroke="#b4b4b4" stroke-width="1"/>
<line x1="124.84" y1="31.64" x2="124.01" y2="27.73" stroke="#b4b4b4" stroke-width="1"/>
<line x1="131.07" y1="30.49" x2="130.45" y2="26.54" stroke="#b4b4b4" stroke-width="1"/>
<line x1="137.35" y1="29.66" x2="136.93" y2="25.68" stroke="#b4b4b4" stroke-width="1"/>
<line x1="143.67" y1="29.17" x2="143.46" y2="25.17" stroke="#b4b4b4" stroke-width="1"/>
<line x1="150.00" y1="32.00" x2="150.00" y2="25.00" stroke="#8c8c8c" stroke-width="2"/>
<line x1="219.36" y1="54.54" x2="223.47" y2="48.87" stroke="#8c8c8c" stroke-width="2"/>
<line x1="262.22" y1="113.54" x2="268.88" y2="111.37" stroke="#8c8c8c" stroke-width="2"/>
<line x1="262.22" y1="186.46" x2="268.88" y2="188.63" stroke="#8c8c8c" stroke-width="2"/>
<line x1="219.36" y1="245.46" x2="223.47" y2="251.13" stroke="#8c8c8c" stroke-width="2"/>
<line x1="150.00" y1="268.00" x2="150.00" y2="275.00" stroke="#8c8c8c" stroke-width="2"/>
<line x1="80.64" y1="245.46" x2="76.53" y2="251.13" stroke="#8c8c8c" stroke-width="2"/>
<line x1="37.78" y1="186.46" x2="31.12" y2="188.63" stroke="#8c8c8c" stroke-width="2"/>
<line x1="37.78" y1="113.54" x2="31.12" y2="111.37" stroke="#8c8c8c" stroke-width="2"/>
<line x1="80.64" y1="54.54" x2="76.53" y2="48.87" stroke="#8c8c8c" stroke-width="2"/>
<path d="M150.00,150.00 L150.00,55.00 A95,95 0 1 1 94.16,226.86 Z" fill="url(#g2p)"/>
<path d="M150.00,150.00 L94.16,226.86 A95,95 0 0 1 73.14,94.16 Z" fill="url(#g2b)"/>
<path d="M150.00,150.00 L73.14,94.16 A95,95 0 0 1 150.00,55.00 Z" fill="url(#g2y)"/>
<circle cx="150" cy="150" r="125" fill="none" stroke="#222" stroke-width="1.3"/>
<g font-family="Liberation Sans" fill="#000"><text x="214.42" y="61.33" transform="rotate(36 214.42 61.33)" font-size="14" text-anchor="middle" dy="4.7" textLength="15.0" lengthAdjust="spacingAndGlyphs">10</text>
<text x="254.24" y="116.13" transform="rotate(72 254.24 116.13)" font-size="14" text-anchor="middle" dy="4.7" textLength="15.0" lengthAdjust="spacingAndGlyphs">20</text>
<text x="254.24" y="183.87" transform="rotate(108 254.24 183.87)" font-size="14" text-anchor="middle" dy="4.7" textLength="15.0" lengthAdjust="spacingAndGlyphs">30</text>
<text x="214.42" y="238.67" transform="rotate(144 214.42 238.67)" font-size="14" text-anchor="middle" dy="4.7" textLength="15.0" lengthAdjust="spacingAndGlyphs">40</text>
<text x="150.00" y="259.60" transform="rotate(180 150.00 259.60)" font-size="14" text-anchor="middle" dy="4.7" textLength="15.0" lengthAdjust="spacingAndGlyphs">50</text>
<text x="85.58" y="238.67" transform="rotate(216 85.58 238.67)" font-size="14" text-anchor="middle" dy="4.7" textLength="15.0" lengthAdjust="spacingAndGlyphs">60</text>
<text x="45.76" y="183.87" transform="rotate(252 45.76 183.87)" font-size="14" text-anchor="middle" dy="4.7" textLength="15.0" lengthAdjust="spacingAndGlyphs">70</text>
<text x="45.76" y="116.13" transform="rotate(288 45.76 116.13)" font-size="14" text-anchor="middle" dy="4.7" textLength="15.0" lengthAdjust="spacingAndGlyphs">80</text>
<text x="85.58" y="61.33" transform="rotate(324 85.58 61.33)" font-size="14" text-anchor="middle" dy="4.7" textLength="15.0" lengthAdjust="spacingAndGlyphs">90</text>
<text x="150.00" y="40.40" transform="rotate(360 150.00 40.40)" font-size="14" text-anchor="middle" dy="4.7" textLength="22.5" lengthAdjust="spacingAndGlyphs">100</text></g>
<line x1="150" y1="150" x2="170.89" y2="231.36" stroke="#333" stroke-width="4.5" stroke-linecap="round"/>
<circle cx="150" cy="150" r="9.2" fill="#333" filter="url(#sh2b)"/>
<circle cx="150" cy="150" r="8.2" fill="#333"/>
<circle cx="150" cy="150" r="2.2" fill="#888"/>
</svg>
<svg width="300" height="300" viewBox="0 0 300 300" style="position:absolute;left:616px;top:99px">
<defs>
<radialGradient id="g3bez" gradientUnits="userSpaceOnUse" cx="150" cy="150" r="120">
<stop offset="0.82" stop-color="#c6c4b8"/><stop offset="0.887" stop-color="#efeee9"/><stop offset="0.95" stop-color="#c6c4b7"/><stop offset="1" stop-color="#bcbaac"/></radialGradient>
<radialGradient id="g3in" gradientUnits="userSpaceOnUse" cx="150" cy="150" r="65"><stop offset="0" stop-color="#fff"/><stop offset="1" stop-color="#bbb"/></radialGradient>
<filter id="sh3" x="-50%" y="-50%" width="200%" height="200%"><feGaussianBlur stdDeviation="1.5"/></filter>
</defs>
<text x="150" y="18" font-family="Liberation Sans" font-size="17" text-anchor="middle" textLength="170" lengthAdjust="spacingAndGlyphs">A bordered compas</text>
<circle cx="150" cy="150" r="120" fill="url(#g3bez)"/>
<circle cx="150" cy="150" r="99" fill="#eee"/>
<line x1="150.00" y1="150.00" x2="150.00" y2="51.00" stroke="#ddd" stroke-width="1"/>
<line x1="150.00" y1="150.00" x2="180.59" y2="55.85" stroke="#ddd" stroke-width="1"/>
<line x1="150.00" y1="150.00" x2="208.19" y2="69.91" stroke="#ddd" stroke-width="1"/>
<line x1="150.00" y1="150.00" x2="230.09" y2="91.81" stroke="#ddd" stroke-width="1"/>
<line x1="150.00" y1="150.00" x2="244.15" y2="119.41" stroke="#ddd" stroke-width="1"/>
<line x1="150.00" y1="150.00" x2="249.00" y2="150.00" stroke="#ddd" stroke-width="1"/>
<line x1="150.00" y1="150.00" x2="244.15" y2="180.59" stroke="#ddd" stroke-width="1"/>
<line x1="150.00" y1="150.00" x2="230.09" y2="208.19" stroke="#ddd" stroke-width="1"/>
<line x1="150.00" y1="150.00" x2="208.19" y2="230.09" stroke="#ddd" stroke-width="1"/>
<line x1="150.00" y1="150.00" x2="180.59" y2="244.15" stroke="#ddd" stroke-width="1"/>
<line x1="150.00" y1="150.00" x2="150.00" y2="249.00" stroke="#ddd" stroke-width="1"/>
<line x1="150.00" y1="150.00" x2="119.41" y2="244.15" stroke="#ddd" stroke-width="1"/>
<line x1="150.00" y1="150.00" x2="91.81" y2="230.09" stroke="#ddd" stroke-width="1"/>
<line x1="150.00" y1="150.00" x2="69.91" y2="208.19" stroke="#ddd" stroke-width="1"/>
<line x1="150.00" y1="150.00" x2="55.85" y2="180.59" stroke="#ddd" stroke-width="1"/>
<line x1="150.00" y1="150.00" x2="51.00" y2="150.00" stroke="#ddd" stroke-width="1"/>
<line x1="150.00" y1="150.00" x2="55.85" y2="119.41" stroke="#ddd" stroke-width="1"/>
<line x1="150.00" y1="150.00" x2="69.91" y2="91.81" stroke="#ddd" stroke-width="1"/>
<line x1="150.00" y1="150.00" x2="91.81" y2="69.91" stroke="#ddd" stroke-width="1"/>
<line x1="150.00" y1="150.00" x2="119.41" y2="55.85" stroke="#ddd" stroke-width="1"/>
<line x1="154.97" y1="55.13" x2="155.18" y2="51.14" stroke="#b4b4b4" stroke-width="1"/>
<line x1="159.93" y1="55.52" x2="160.35" y2="51.54" stroke="#b4b4b4" stroke-width="1"/>
<line x1="164.86" y1="56.17" x2="165.49" y2="52.22" stroke="#b4b4b4" stroke-width="1"/>
<line x1="169.75" y1="57.08" x2="170.58" y2="53.16" stroke="#b4b4b4" stroke-width="1"/>
<line x1="174.59" y1="58.24" x2="175.62" y2="54.37" stroke="#b4b4b4" stroke-width="1"/>
<line x1="179.36" y1="59.65" x2="180.59" y2="55.85" stroke="#b4b4b4" stroke-width="1"/>
<line x1="184.04" y1="61.31" x2="185.48" y2="57.58" stroke="#b4b4b4" stroke-width="1"/>
<line x1="188.64" y1="63.21" x2="190.27" y2="59.56" stroke="#b4b4b4" stroke-width="1"/>
<line x1="193.13" y1="65.35" x2="194.95" y2="61.79" stroke="#b4b4b4" stroke-width="1"/>
<line x1="197.50" y1="67.73" x2="199.50" y2="64.26" stroke="#b4b4b4" stroke-width="1"/>
<line x1="201.74" y1="70.33" x2="203.92" y2="66.97" stroke="#b4b4b4" stroke-width="1"/>
<line x1="209.79" y1="76.17" x2="212.30" y2="73.06" stroke="#b4b4b4" stroke-width="1"/>
<line x1="213.57" y1="79.40" x2="216.24" y2="76.43" stroke="#b4b4b4" stroke-width="1"/>
<line x1="217.18" y1="82.82" x2="220.00" y2="80.00" stroke="#b4b4b4" stroke-width="1"/>
<line x1="220.60" y1="86.43" x2="223.57" y2="83.76" stroke="#b4b4b4" stroke-width="1"/>
<line x1="223.83" y1="90.21" x2="226.94" y2="87.70" stroke="#b4b4b4" stroke-width="1"/>
<line x1="226.86" y1="94.16" x2="230.09" y2="91.81" stroke="#b4b4b4" stroke-width="1"/>
<line x1="229.67" y1="98.26" x2="233.03" y2="96.08" stroke="#b4b4b4" stroke-width="1"/>
<line x1="232.27" y1="102.50" x2="235.74" y2="100.50" stroke="#b4b4b4" stroke-width="1"/>
<line x1="234.65" y1="106.87" x2="238.21" y2="105.05" stroke="#b4b4b4" stroke-width="1"/>
<line x1="236.79" y1="111.36" x2="240.44" y2="109.73" stroke="#b4b4b4" stroke-width="1"/>
<line x1="238.69" y1="115.96" x2="242.42" y2="114.52" stroke="#b4b4b4" stroke-width="1"/>
<line x1="241.76" y1="125.41" x2="245.63" y2="124.38" stroke="#b4b4b4" stroke-width="1"/>
<line x1="242.92" y1="130.25" x2="246.84" y2="129.42" stroke="#b4b4b4" stroke-width="1"/>
<line x1="243.83" y1="135.14" x2="247.78" y2="134.51" stroke="#b4b4b4" stroke-width="1"/>
<line x1="244.48" y1="140.07" x2="248.46" y2="139.65" stroke="#b4b4b4" stroke-width="1"/>
<line x1="244.87" y1="145.03" x2="248.86" y2="144.82" stroke="#b4b4b4" stroke-width="1"/>
<line x1="245.00" y1="150.00" x2="249.00" y2="150.00" stroke="#b4b4b4" stroke-width="1"/>
<line x1="244.87" y1="154.97" x2="248.86" y2="155.18" stroke="#b4b4b4" stroke-width="1"/>
<line x1="244.48" y1="159.93" x2="248.46" y2="160.35" stroke="#b4b4b4" stroke-width="1"/>
<line x1="243.83" y1="164.86" x2="247.78" y2="165.49" stroke="#b4b4b4" stroke-width="1"/>
<line x1="242.92" y1="169.75" x2="246.84" y2="170.58" stroke="#b4b4b4" stroke-width="1"/>
<line x1="241.76" y1="174.59" x2="245.63" y2="175.62" stroke="#b4b4b4" stroke-width="1"/>
<line x1="238.69" y1="184.04" x2="242.42" y2="185.48" stroke="#b4b4b4" stroke-width="1"/>
<line x1="236.79" y1="188.64" x2="240.44" y2="190.27" stroke="#b4b4b4" stroke-width="1"/>
<line x1="234.65" y1="193.13" x2="238.21" y2="194.95" stroke="#b4b4b4" stroke-width="1"/>
<line x1="232.27" y1="197.50" x2="235.74" y2="199.50" stroke="#b4b4b4" stroke-width="1"/>
<line x1="229.67" y1="201.74" x2="233.03" y2="203.92" stroke="#b4b4b4" stroke-width="1"/>
<line x1="226.86" y1="205.84" x2="230.09" y2="208.19" stroke="#b4b4b4" stroke-width="1"/>
<line x1="223.83" y1="209.79" x2="226.94" y2="212.30" stroke="#b4b4b4" stroke-width="1"/>
<line x1="220.60" y1="213.57" x2="223.57" y2="216.24" stroke="#b4b4b4" stroke-width="1"/>
<line x1="217.18" y1="217.18" x2="220.00" y2="220.00" stroke="#b4b4b4" stroke-width="1"/>
<line x1="213.57" y1="220.60" x2="216.24" y2="223.57" stroke="#b4b4b4" stroke-width="1"/>
<line x1="209.79" y1="223.83" x2="212.30" y2="226.94" stroke="#b4b4b4" stroke-width="1"/>
<line x1="201.74" y1="229.67" x2="203.92" y2="233.03" stroke="#b4b4b4" stroke-width="1"/>
<line x1="197.50" y1="232.27" x2="199.50" y2="235.74" stroke="#b4b4b4" stroke-width="1"/>
<line x1="193.13" y1="234.65" x2="194.95" y2="238.21" stroke="#b4b4b4" stroke-width="1"/>
<line x1="188.64" y1="236.79" x2="190.27" y2="240.44" stroke="#b4b4b4" stroke-width="1"/>
<line x1="184.04" y1="238.69" x2="185.48" y2="242.42" stroke="#b4b4b4" stroke-width="1"/>
<line x1="179.36" y1="240.35" x2="180.59" y2="244.15" stroke="#b4b4b4" stroke-width="1"/>
<line x1="174.59" y1="241.76" x2="175.62" y2="245.63" stroke="#b4b4b4" stroke-width="1"/>
<line x1="169.75" y1="242.92" x2="170.58" y2="246.84" stroke="#b4b4b4" stroke-width="1"/>
<line x1="164.86" y1="243.83" x2="165.49" y2="247.78" stroke="#b4b4b4" stroke-width="1"/>
<line x1="159.93" y1="244.48" x2="160.35" y2="248.46" stroke="#b4b4b4" stroke-width="1"/>
<line x1="154.97" y1="244.87" x2="155.18" y2="248.86" stroke="#b4b4b4" stroke-width="1"/>
<line x1="145.03" y1="244.87" x2="144.82" y2="248.86" stroke="#b4b4b4" stroke-width="1"/>
<line x1="140.07" y1="244.48" x2="139.65" y2="248.46" stroke="#b4b4b4" stroke-width="1"/>
<line x1="135.14" y1="243.83" x2="134.51" y2="247.78" stroke="#b4b4b4" stroke-width="1"/>
<line x1="130.25" y1="242.92" x2="129.42" y2="246.84" stroke="#b4b4b4" stroke-width="1"/>
<line x1="125.41" y1="241.76" x2="124.38" y2="245.63" stroke="#b4b4b4" stroke-width="1"/>
<line x1="120.64" y1="240.35" x2="119.41" y2="244.15" stroke="#b4b4b4" stroke-width="1"/>
<line x1="115.96" y1="238.69" x2="114.52" y2="242.42" stroke="#b4b4b4" stroke-width="1"/>
<line x1="111.36" y1="236.79" x2="109.73" y2="240.44" stroke="#b4b4b4" stroke-width="1"/>
<line x1="106.87" y1="234.65" x2="105.05" y2="238.21" stroke="#b4b4b4" stroke-width="1"/>
<line x1="102.50" y1="232.27" x2="100.50" y2="235.74" stroke="#b4b4b4" stroke-width="1"/>
<line x1="98.26" y1="229.67" x2="96.08" y2="233.03" stroke="#b4b4b4" stroke-width="1"/>
<line x1="90.21" y1="223.83" x2="87.70" y2="226.94" stroke="#b4b4b4" stroke-width="1"/>
<line x1="86.43" y1="220.60" x2="83.76" y2="223.57" stroke="#b4b4b4" stroke-width="1"/>
<line x1="82.82" y1="217.18" x2="80.00" y2="220.00" stroke="#b4b4b4" stroke-width="1"/>
<line x1="79.40" y1="213.57" x2="76.43" y2="216.24" stroke="#b4b4b4" stroke-width="1"/>
<line x1="76.17" y1="209.79" x2="73.06" y2="212.30" stroke="#b4b4b4" stroke-width="1"/>
<line x1="73.14" y1="205.84" x2="69.91" y2="208.19" stroke="#b4b4b4" stroke-width="1"/>
<line x1="70.33" y1="201.74" x2="66.97" y2="203.92" stroke="#b4b4b4" stroke-width="1"/>
<line x1="67.73" y1="197.50" x2="64.26" y2="199.50" stroke="#b4b4b4" stroke-width="1"/>
<line x1="65.35" y1="193.13" x2="61.79" y2="194.95" stroke="#b4b4b4" stroke-width="1"/>
<line x1="63.21" y1="188.64" x2="59.56" y2="190.27" stroke="#b4b4b4" stroke-width="1"/>
<line x1="61.31" y1="184.04" x2="57.58" y2="185.48" stroke="#b4b4b4" stroke-width="1"/>
<line x1="58.24" y1="174.59" x2="54.37" y2="175.62" stroke="#b4b4b4" stroke-width="1"/>
<line x1="57.08" y1="169.75" x2="53.16" y2="170.58" stroke="#b4b4b4" stroke-width="1"/>
<line x1="56.17" y1="164.86" x2="52.22" y2="165.49" stroke="#b4b4b4" stroke-width="1"/>
<line x1="55.52" y1="159.93" x2="51.54" y2="160.35" stroke="#b4b4b4" stroke-width="1"/>
<line x1="55.13" y1="154.97" x2="51.14" y2="155.18" stroke="#b4b4b4" stroke-width="1"/>
<line x1="55.00" y1="150.00" x2="51.00" y2="150.00" stroke="#b4b4b4" stroke-width="1"/>
<line x1="55.13" y1="145.03" x2="51.14" y2="144.82" stroke="#b4b4b4" stroke-width="1"/>
<line x1="55.52" y1="140.07" x2="51.54" y2="139.65" stroke="#b4b4b4" stroke-width="1"/>
<line x1="56.17" y1="135.14" x2="52.22" y2="134.51" stroke="#b4b4b4" stroke-width="1"/>
<line x1="57.08" y1="130.25" x2="53.16" y2="129.42" stroke="#b4b4b4" stroke-width="1"/>
<line x1="58.24" y1="125.41" x2="54.37" y2="124.38" stroke="#b4b4b4" stroke-width="1"/>
<line x1="61.31" y1="115.96" x2="57.58" y2="114.52" stroke="#b4b4b4" stroke-width="1"/>
<line x1="63.21" y1="111.36" x2="59.56" y2="109.73" stroke="#b4b4b4" stroke-width="1"/>
<line x1="65.35" y1="106.87" x2="61.79" y2="105.05" stroke="#b4b4b4" stroke-width="1"/>
<line x1="67.73" y1="102.50" x2="64.26" y2="100.50" stroke="#b4b4b4" stroke-width="1"/>
<line x1="70.33" y1="98.26" x2="66.97" y2="96.08" stroke="#b4b4b4" stroke-width="1"/>
<line x1="73.14" y1="94.16" x2="69.91" y2="91.81" stroke="#b4b4b4" stroke-width="1"/>
<line x1="76.17" y1="90.21" x2="73.06" y2="87.70" stroke="#b4b4b4" stroke-width="1"/>
<line x1="79.40" y1="86.43" x2="76.43" y2="83.76" stroke="#b4b4b4" stroke-width="1"/>
<line x1="82.82" y1="82.82" x2="80.00" y2="80.00" stroke="#b4b4b4" stroke-width="1"/>
<line x1="86.43" y1="79.40" x2="83.76" y2="76.43" stroke="#b4b4b4" stroke-width="1"/>
<line x1="90.21" y1="76.17" x2="87.70" y2="73.06" stroke="#b4b4b4" stroke-width="1"/>
<line x1="98.26" y1="70.33" x2="96.08" y2="66.97" stroke="#b4b4b4" stroke-width="1"/>
<line x1="102.50" y1="67.73" x2="100.50" y2="64.26" stroke="#b4b4b4" stroke-width="1"/>
<line x1="106.87" y1="65.35" x2="105.05" y2="61.79" stroke="#b4b4b4" stroke-width="1"/>
<line x1="111.36" y1="63.21" x2="109.73" y2="59.56" stroke="#b4b4b4" stroke-width="1"/>
<line x1="115.96" y1="61.31" x2="114.52" y2="57.58" stroke="#b4b4b4" stroke-width="1"/>
<line x1="120.64" y1="59.65" x2="119.41" y2="55.85" stroke="#b4b4b4" stroke-width="1"/>
<line x1="125.41" y1="58.24" x2="124.38" y2="54.37" stroke="#b4b4b4" stroke-width="1"/>
<line x1="130.25" y1="57.08" x2="129.42" y2="53.16" stroke="#b4b4b4" stroke-width="1"/>
<line x1="135.14" y1="56.17" x2="134.51" y2="52.22" stroke="#b4b4b4" stroke-width="1"/>
<line x1="140.07" y1="55.52" x2="139.65" y2="51.54" stroke="#b4b4b4" stroke-width="1"/>
<line x1="145.03" y1="55.13" x2="144.82" y2="51.14" stroke="#b4b4b4" stroke-width="1"/>
<line x1="150.00" y1="57.00" x2="150.00" y2="51.00" stroke="#8c8c8c" stroke-width="2"/>
<line x1="204.66" y1="74.76" x2="208.19" y2="69.91" stroke="#8c8c8c" stroke-width="2"/>
<line x1="238.45" y1="121.26" x2="244.15" y2="119.41" stroke="#8c8c8c" stroke-width="2"/>
<line x1="238.45" y1="178.74" x2="244.15" y2="180.59" stroke="#8c8c8c" stroke-width="2"/>
<line x1="204.66" y1="225.24" x2="208.19" y2="230.09" stroke="#8c8c8c" stroke-width="2"/>
<line x1="150.00" y1="243.00" x2="150.00" y2="249.00" stroke="#8c8c8c" stroke-width="2"/>
<line x1="95.34" y1="225.24" x2="91.81" y2="230.09" stroke="#8c8c8c" stroke-width="2"/>
<line x1="61.55" y1="178.74" x2="55.85" y2="180.59" stroke="#8c8c8c" stroke-width="2"/>
<line x1="61.55" y1="121.26" x2="55.85" y2="119.41" stroke="#8c8c8c" stroke-width="2"/>
<line x1="95.34" y1="74.76" x2="91.81" y2="69.91" stroke="#8c8c8c" stroke-width="2"/>
<circle cx="150" cy="150" r="65" fill="url(#g3in)" stroke="#e2e2c8" stroke-width="1"/>
<g font-family="Liberation Sans" font-size="13" fill="#000"><text x="150.00" y="67.50" dy="5.4" text-anchor="middle">N</text><text x="208.34" y="91.66" dy="5.4" text-anchor="middle">NE</text><text x="232.50" y="150.00" dy="5.4" text-anchor="middle">E</text><text x="208.34" y="208.34" dy="5.4" text-anchor="middle">SE</text><text x="150.00" y="232.50" dy="5.4" text-anchor="middle">S</text><text x="91.66" y="208.34" dy="5.4" text-anchor="middle">SW</text><text x="67.50" y="150.00" dy="5.4" text-anchor="middle">W</text><text x="91.66" y="91.66" dy="5.4" text-anchor="middle">NW</text></g>
<line x1="150" y1="150" x2="191.60" y2="122.26" stroke="#000" stroke-width="2.5"/>
<path d="M199.92,116.71 L192.71,127.53 L187.16,119.21 Z" fill="#000"/>
<circle cx="150" cy="150" r="10" fill="#000" filter="url(#sh3)"/>
<circle cx="150" cy="150" r="8.5" fill="#000"/>
<circle cx="150" cy="150" r="2" fill="#888"/>
<rect x="101.5" y="162.5" width="97" height="19" fill="#fff" stroke="#aaa" stroke-width="1"/>
<text x="150" y="177.5" font-family="Liberation Sans" font-size="17" text-anchor="middle" textLength="89" lengthAdjust="spacingAndGlyphs" stroke="#fff" stroke-width="0.3">56 degrees</text>
</svg>
</div>
<div class="a" style="left:0;top:458px;width:1024px;height:4px;background:#dcdcdc"></div>
<div class="a" style="left:0;top:462px;width:1024px;height:1px;background:#9c9c9c"></div>
<div class="a" style="left:0;top:463px;width:1024px;height:32px;background:linear-gradient(#e2e2e2,#dcdcdc)"></div>
<div class="a" style="left:0;top:495px;width:1024px;height:1px;background:#9c9c9c"></div>
<div class="a" style="left:0;top:463px;width:82px;height:32px;background:linear-gradient(#d2d2d2,#c6c6c6 50%,#d0d0d0);box-shadow:inset 2px 0 2px -1px #888, inset -2px 0 2px -1px #999"></div>
<div class="a" style="left:32.5px;top:471.8px;font-size:11px;line-height:14px;color:#102a6e;white-space:nowrap;letter-spacing:-0.45px">Elements</div>
<div class="a" style="left:114.5px;top:471.8px;font-size:11px;line-height:14px;color:#102a6e;white-space:nowrap;letter-spacing:0px">Resources</div>
<div class="a" style="left:206.5px;top:471.8px;font-size:11px;line-height:14px;color:#102a6e;white-space:nowrap;letter-spacing:0px">Scripts</div>
<div class="a" style="left:280px;top:471.8px;font-size:11px;line-height:14px;color:#102a6e;white-space:nowrap;letter-spacing:-0.4px">Timeline</div>
<div class="a" style="left:356px;top:471.8px;font-size:11px;line-height:14px;color:#102a6e;white-space:nowrap;letter-spacing:0px">Profiles</div>
<div class="a" style="left:431.5px;top:471.8px;font-size:11px;line-height:14px;color:#102a6e;white-space:nowrap;letter-spacing:0px">Storage</div>
<div class="a" style="left:508.5px;top:471.8px;font-size:11px;line-height:14px;color:#102a6e;white-space:nowrap;letter-spacing:0px">Audits</div>
<div class="a" style="left:578.5px;top:471.8px;font-size:11px;line-height:14px;color:#102a6e;white-space:nowrap;letter-spacing:0px">Console</div>
<svg class="a" style="left:0;top:463px" width="640" height="32" viewBox="0 0 640 32">
<defs>
<linearGradient id="elg" x1="0" y1="0" x2="0" y2="1"><stop offset="0" stop-color="#9be26c"/><stop offset="1" stop-color="#6cc443"/></linearGradient>
<linearGradient id="ylg" x1="0" y1="0" x2="0" y2="1"><stop offset="0" stop-color="#f4d62a"/><stop offset="1" stop-color="#d9a500"/></linearGradient>
<linearGradient id="clk" x1="0" y1="0" x2="0" y2="1"><stop offset="0" stop-color="#aaa"/><stop offset="1" stop-color="#666"/></linearGradient>
<linearGradient id="db" x1="0" y1="0" x2="1" y2="0"><stop offset="0" stop-color="#777"/><stop offset="0.5" stop-color="#ccc"/><stop offset="1" stop-color="#888"/></linearGradient>
</defs>
<!-- elements -->
<rect x="8.5" y="6" width="19" height="18" rx="3" fill="url(#elg)" stroke="#5aa63a" stroke-width="0.8"/>
<path d="M15,11 L11.5,14.5 L15,18 M19.5,11 L23,14.5 L19.5,18" fill="none" stroke="#4b7f2e" stroke-width="1.6"/>
<rect x="18.5" y="18" width="10" height="8" rx="1" fill="url(#ylg)"/>
<path d="M22.5,6.5 H26.5 V19" fill="none" stroke="#fff" stroke-width="2"/>
<!-- resources -->
<rect x="91.5" y="5.5" width="17" height="19.5" fill="#f2f2f2" stroke="#9a9a9a" stroke-width="0.9"/>
<path d="M94,8.5 H106 M94,10.5 H106" stroke="#c8c8c8" stroke-width="1"/>
<path d="M90.5,14.5 L101.5,12.5 L102.5,21.5 L91.5,23 Z" fill="#1a4ef0" stroke="#e8e8e8" stroke-width="1.2"/>
<rect x="102" y="11.5" width="8.5" height="10.5" fill="#fafafa" stroke="#aaa" stroke-width="0.7"/>
<path d="M103.5,14.5 H109 M103.5,17 H109 M103.5,19.5 H108" stroke="#ccc" stroke-width="0.7"/>
<!-- scripts -->
<path d="M182.5,4.5 H195 L200,9.5 V26.5 H182.5 Z" fill="#f4f4f4" stroke="#aaa" stroke-width="0.9"/>
<path d="M195,4.5 V9.5 H200" fill="#ddd" stroke="#bbb" stroke-width="0.6"/>
<text x="184" y="13.5" font-family="Liberation Mono" font-size="9.5" fill="#3a3a3a" font-weight="bold">{}</text>
<path d="M185,17.5 H189 M185,20 H188 M185,22.5 H189" stroke="#888" stroke-width="0.9"/>
<circle cx="197" cy="21" r="4.2" fill="#d42020" stroke="#8a1010" stroke-width="0.6"/><path d="M193,17.5 L194.5,18.5 M201,17.5 L199.5,18.5 M192.5,22 H193.5 M201.5,22 H200.5" stroke="#333" stroke-width="0.8"/>
<path d="M193.5,24.5 L200.5,17.5" stroke="#fbb" stroke-width="0.8"/>
<!-- timeline -->
<circle cx="262" cy="16.5" r="9.5" fill="url(#clk)"/>
<circle cx="262" cy="16.5" r="6.8" fill="#f4f4f4"/>
<path d="M262,16.5 L258.5,20" stroke="#e55" stroke-width="1"/>
<path d="M262,16.5 V12" stroke="#333" stroke-width="1"/>
<path d="M265.5,9 L274,25" stroke="#555" stroke-width="2.2"/>
<path d="M264,8.5 C266.5,5 269.5,7.5 272.5,5 L277,11.5 C274,14 271,12 267.5,14.5 Z" fill="#d52a1a" stroke="#8a1a10" stroke-width="0.6"/>
<!-- profiles -->
<circle cx="335.5" cy="7.5" r="2.2" fill="#777"/>
<circle cx="341" cy="16" r="9.4" fill="url(#clk)"/>
<circle cx="341" cy="16" r="6.9" fill="#eef0f8" stroke="#999" stroke-width="0.6"/>
<path d="M341,16 L338,11.5" stroke="#333" stroke-width="1"/>
<path d="M341,16 L344,10.5" stroke="#e04848" stroke-width="1"/>
<rect x="343.5" y="14.5" width="8.5" height="10.5" fill="#f2eeb8" stroke="#cfc890" stroke-width="0.7"/>
<text x="344.6" y="21.5" font-family="Liberation Sans" font-size="7" fill="#7a9050">%</text>
<path d="M344.5,23 H351" stroke="#d8d0a0" stroke-width="0.8"/>
<!-- storage -->
<rect x="407" y="5" width="19" height="7.6" rx="3.5" fill="url(#db)"/>
<rect x="407" y="11.6" width="19" height="7" rx="3.5" fill="url(#db)"/>
<rect x="407" y="17.8" width="19" height="7.4" rx="3.5" fill="url(#db)"/>
<ellipse cx="416.5" cy="7.2" rx="7" ry="1.6" fill="#e8e8e8" opacity="0.8"/>
<rect x="414" y="10.8" width="13" height="10.5" fill="#f2f2f2" stroke="#aaa" stroke-width="0.6"/>
<rect x="415" y="10.8" width="4.5" height="1.6" fill="#7cc860"/>
<rect x="412.3" y="13.5" width="11" height="10.7" fill="#f8f8f4" stroke="#999" stroke-width="0.6"/>
<rect x="413" y="13.5" width="4.5" height="1.6" fill="#d86070"/>
<rect x="412.6" y="15.2" width="2.6" height="8.8" fill="#b8c8f0"/>
<!-- audits -->
<rect x="485" y="6" width="18" height="20" fill="#eee" stroke="#aaa" stroke-width="0.8"/>
<circle cx="493" cy="11.8" r="6.6" fill="#e4f6f8" stroke="#333" stroke-width="1.3"/>
<path d="M489.5,11.5 L491.5,14.5 L495,9" fill="none" stroke="#d44" stroke-width="1.4"/>
<path d="M498,17.5 L503.5,23" stroke="#111" stroke-width="3.6" stroke-linecap="round"/>
<rect x="487" y="21" width="6" height="3" fill="#ccc"/>
<!-- console -->
<rect x="553.5" y="6.5" width="21" height="19" fill="#f4f4f4" stroke="#888" stroke-width="1"/>
<rect x="555" y="8" width="18" height="16" fill="none" stroke="#ccc" stroke-width="1"/>
<path d="M563,8 V14" stroke="#bbb" stroke-width="1"/>
<path d="M558,10 L560.5,11.5 L558,13" fill="none" stroke="#4a8fe8" stroke-width="1.2"/>
<path d="M561,26 L566,16.5 L571,26 Z" fill="#f2cc22" stroke="#c49a00" stroke-width="0.6"/>
<circle cx="571" cy="19.5" r="4.5" fill="#d42a2a"/>
<path d="M569,17.5 L573,21.5 M573,17.5 L569,21.5" stroke="#fdd" stroke-width="1"/>
</svg>
<div class="a" style="left:782px;top:469px;width:204px;height:19px;background:#fff;border:1px solid #aaa;border-top-color:#666;border-left-color:#777;box-shadow:inset 1px 1px 0 #bbb"></div>
<svg class="a" style="left:786px;top:472px" width="13" height="13" viewBox="0 0 13 13"><circle cx="5" cy="5" r="3.5" fill="none" stroke="#3b6ec0" stroke-width="1.6"/><path d="M7.5,7.5 L11.5,11.5" stroke="#3b6ec0" stroke-width="2.2" stroke-linecap="round"/></svg>
<div class="a" style="left:801.5px;top:472px;font-size:11px;line-height:14px;color:#a8a8a8;white-space:nowrap">Search Elements</div>
<svg class="a" style="left:998px;top:471px" width="16" height="16" viewBox="0 0 16 16"><circle cx="8" cy="8" r="7.2" fill="#a9a9a9"/><path d="M5,5 L11,11 M11,5 L5,11" stroke="#fff" stroke-width="2"/></svg>
<div class="a" style="left:0;top:496px;width:683px;height:199px;background:#fff;overflow:hidden">
<div class="a mono" style="left:18.5px;top:3px;font-size:11.65px;line-height:15px;white-space:pre"><span style="color:#c0c0c0">&lt;!DOCTYPE html&gt;</span></div>
<div class="a mono" style="left:18.5px;top:18px;font-size:11.65px;line-height:15px;white-space:pre"><span style="color:#881280">&lt;html&gt;</span></div>
<div class="a" style="left:7.0px;top:23px;width:0;height:0;border-left:4px solid transparent;border-right:4px solid transparent;border-top:7px solid #505050"></div>
<div class="a mono" style="left:30.5px;top:33px;font-size:11.65px;line-height:15px;white-space:pre"><span style="color:#881280">&lt;head&gt;</span><span style="color:#222">…</span><span style="color:#881280">&lt;/head&gt;</span></div>
<div class="a" style="left:20.5px;top:36.5px;width:0;height:0;border-top:4px solid transparent;border-bottom:4px solid transparent;border-left:7px solid #505050"></div>
<div class="a mono" style="left:30.5px;top:48px;font-size:11.65px;line-height:15px;white-space:pre"><span style="color:#881280">&lt;body&gt;</span></div>
<div class="a" style="left:19.0px;top:53px;width:0;height:0;border-left:4px solid transparent;border-right:4px solid transparent;border-top:7px solid #505050"></div>
<div class="a mono" style="left:42.5px;top:63px;font-size:11.65px;line-height:15px;white-space:pre"><span style="color:#881280">&lt;h1&gt;</span><span style="color:#000">Odometer test page</span><span style="color:#881280">&lt;/h1&gt;</span></div>
<div class="a mono" style="left:42.5px;top:78px;font-size:11.65px;line-height:15px;white-space:pre"><span style="color:#881280">&lt;a </span><span style="color:#994500">href</span><span style="color:#881280">="</span><span style="color:#1a1aa6">./</span><span style="color:#881280">"&gt;</span><span style="color:#000">&lt;Back</span><span style="color:#881280">&lt;/a&gt;</span></div>
<div class="a mono" style="left:42.5px;top:93px;font-size:11.65px;line-height:15px;white-space:pre"><span style="color:#881280">&lt;br&gt;</span></div>
<div class="a mono" style="left:42.5px;top:108px;font-size:11.65px;line-height:15px;white-space:pre"><span style="color:#236e25">&lt;!-- ODO 1 --&gt;</span></div>
<div class="a" style="left:0;top:123px;width:683px;height:15px;background:#d4d4d4"></div>
<div class="a mono" style="left:42.5px;top:123px;font-size:11.65px;line-height:15px;white-space:pre"><span style="color:#881280">&lt;canvas </span><span style="color:#994500">id</span><span style="color:#881280">="</span><span style="color:#1a1aa6">odo1</span><span style="color:#881280">" </span><span style="color:#994500">width</span><span style="color:#881280">="</span><span style="color:#1a1aa6">300</span><span style="color:#881280">" </span><span style="color:#994500">height</span><span style="color:#881280">="</span><span style="color:#1a1aa6">300</span><span style="color:#881280">"&gt;</span><span style="color:#000">[No canvas support]</span><span style="color:#881280">&lt;/canvas&gt;</span></div>
<div class="a mono" style="left:42.5px;top:138px;font-size:11.65px;line-height:15px;white-space:pre"><span style="color:#881280">&lt;script&gt;</span><span style="color:#222">…</span><span style="color:#881280">&lt;/script&gt;</span></div>
<div class="a" style="left:32.5px;top:141.5px;width:0;height:0;border-top:4px solid transparent;border-bottom:4px solid transparent;border-left:7px solid #505050"></div>
<div class="a mono" style="left:42.5px;top:153px;font-size:11.65px;line-height:15px;white-space:pre"><span style="color:#236e25">&lt;!-- ODO 2 --&gt;</span></div>
<div class="a mono" style="left:42.5px;top:168px;font-size:11.65px;line-height:15px;white-space:pre"><span style="color:#881280">&lt;canvas </span><span style="color:#994500">id</span><span style="color:#881280">="</span><span style="color:#1a1aa6">odo2</span><span style="color:#881280">" </span><span style="color:#994500">width</span><span style="color:#881280">="</span><span style="color:#1a1aa6">300</span><span style="color:#881280">" </span><span style="color:#994500">height</span><span style="color:#881280">="</span><span style="color:#1a1aa6">300</span><span style="color:#881280">"&gt;</span><span style="color:#000">[No canvas support]</span><span style="color:#881280">&lt;/canvas&gt;</span></div>
<div class="a mono" style="left:42.5px;top:183px;font-size:11.65px;line-height:15px;white-space:pre"><span style="color:#881280">&lt;script&gt;</span><span style="color:#222">…</span><span style="color:#881280">&lt;/script&gt;</span></div>
<div class="a" style="left:32.5px;top:186.5px;width:0;height:0;border-top:4px solid transparent;border-bottom:4px solid transparent;border-left:7px solid #505050"></div>
</div>
<div class="a" style="left:683px;top:496px;width:16px;height:199px;background:conic-gradient(#d4d0c8 25%,#fff 0 50%,#d4d0c8 0 75%,#fff 0) 0 0/2px 2px"></div>
<div class="a" style="left:683px;top:496px;width:16px;height:16px;background:#d4d0c8;border-top:1px solid #d4d0c8;border-left:1px solid #d4d0c8;border-right:1px solid #404040;border-bottom:1px solid #404040;box-shadow:inset -1px -1px 0 #808080, inset 1px 1px 0 #fff"></div>
<div class="a" style="left:683px;top:679px;width:16px;height:16px;background:#d4d0c8;border-top:1px solid #d4d0c8;border-left:1px solid #d4d0c8;border-right:1px solid #404040;border-bottom:1px solid #404040;box-shadow:inset -1px -1px 0 #808080, inset 1px 1px 0 #fff"></div>
<div class="a" style="left:683px;top:512px;width:16px;height:103px;background:#d4d0c8;border-top:1px solid #d4d0c8;border-left:1px solid #d4d0c8;border-right:1px solid #404040;border-bottom:1px solid #404040;box-shadow:inset -1px -1px 0 #808080, inset 1px 1px 0 #fff"></div>
<div class="a" style="left:686.5px;top:501px;width:0;height:0;border-left:4px solid transparent;border-right:4px solid transparent;border-bottom:4px solid #000"></div>
<div class="a" style="left:686.5px;top:685px;width:0;height:0;border-left:4px solid transparent;border-right:4px solid transparent;border-top:4px solid #000"></div>
<div class="a" style="left:699px;top:496px;width:1px;height:199px;background:#404040"></div>
<div class="a" style="left:700px;top:496px;width:308px;height:199px;background:#fff;overflow:hidden">
<div class="a" style="left:0;top:-9px;width:308px;height:19px;background:linear-gradient(#e6e6e6,#d2d2d2);border-bottom:1px solid #a8a8a8"></div>
<div class="a" style="left:17.5px;top:-9px;font-size:12px;font-weight:bold;line-height:18px;color:#686868;text-shadow:0 1px 0 #fff">Metrics</div>
<div class="a" style="left:0;top:10px;width:308px;height:20px;background:linear-gradient(#f0f0f0 0 1px,#e4e4e4 1px,#d2d2d2);border-bottom:1px solid #b8b8b8"></div>
<div class="a" style="left:6px;top:15px;width:0;height:0;border-left:4.5px solid transparent;border-right:4.5px solid transparent;border-top:7.5px solid #6e6e6e"></div>
<div class="a" style="left:17.5px;top:11px;font-size:12px;font-weight:bold;line-height:18px;color:#686868;text-shadow:0 1px 0 #fff">Properties</div>
<div class="a" style="left:0;top:30px;width:308px;height:20px;background:linear-gradient(#6a88bc,#5a78ac);border-top:1px solid #7b96c6;border-bottom:1px solid #4f6a9a"></div>
<div class="a" style="left:7px;top:36px;width:0;height:0;border-left:4px solid transparent;border-right:4px solid transparent;border-top:8px solid #fff"></div>
<div class="a" style="left:19.5px;top:33px;font-size:11px;line-height:14px;color:#fff;white-space:nowrap;letter-spacing:-0.25px">HTMLCanvasElement</div>
<div class="a" style="left:254.5px;top:33px;font-size:11px;line-height:14px;color:#dbe3f0;white-space:nowrap;letter-spacing:-0.2px">Prototype</div>
<div class="a mono" style="left:18.0px;top:53px;font-size:11.65px;line-height:14px;white-space:pre"><span style="color:#881391">__object__</span><span style="color:#000">: Object</span></div>
<div class="a" style="left:7.0px;top:57px;width:0;height:0;border-left:4px solid transparent;border-right:4px solid transparent;border-top:8px solid #8a8a8a"></div>
<div class="a mono" style="left:30.5px;top:67px;font-size:11.65px;line-height:14px;white-space:pre"><span style="color:#881391">canvas</span><span style="color:#000">: HTMLCanvasElement</span></div>
<div class="a" style="left:19.5px;top:70px;width:0;height:0;border-top:4px solid transparent;border-bottom:4px solid transparent;border-left:8px solid #8a8a8a"></div>
<div class="a mono" style="left:30.5px;top:81px;font-size:11.65px;line-height:14px;white-space:pre"><span style="color:#881391">centerx</span><span style="color:#000">: </span><span style="color:#1c00cf">150</span></div>
<div class="a mono" style="left:30.5px;top:95px;font-size:11.65px;line-height:14px;white-space:pre"><span style="color:#881391">centery</span><span style="color:#000">: </span><span style="color:#1c00cf">150</span></div>
<div class="a mono" style="left:30.5px;top:109px;font-size:11.65px;line-height:14px;white-space:pre"><span style="color:#881391">context</span><span style="color:#000">: CanvasRenderingContext2D</span></div>
<div class="a" style="left:19.5px;top:112px;width:0;height:0;border-top:4px solid transparent;border-bottom:4px solid transparent;border-left:8px solid #8a8a8a"></div>
<div class="a mono" style="left:30.5px;top:123px;font-size:11.65px;line-height:14px;white-space:pre"><span style="color:#881391">diameter</span><span style="color:#000">: </span><span style="color:#1c00cf">250</span></div>
<div class="a mono" style="left:30.5px;top:137px;font-size:11.65px;line-height:14px;white-space:pre"><span style="color:#881391">end</span><span style="color:#000">: </span><span style="color:#1c00cf">100</span></div>
<div class="a mono" style="left:30.5px;top:151px;font-size:11.65px;line-height:14px;white-space:pre"><span style="color:#881391">id</span><span style="color:#000">: </span><span style="color:#c41a16">"odo1"</span></div>
<div class="a mono" style="left:30.5px;top:165px;font-size:11.65px;line-height:14px;white-space:pre"><span style="color:#881391">isRGraph</span><span style="color:#000">: true</span></div>
<div class="a mono" style="left:30.5px;top:179px;font-size:11.65px;line-height:14px;white-space:pre"><span style="color:#881391">properties</span><span style="color:#000">: Object</span></div>
<div class="a" style="left:19.5px;top:182px;width:0;height:0;border-top:4px solid transparent;border-bottom:4px solid transparent;border-left:8px solid #8a8a8a"></div>
<div class="a mono" style="left:30.5px;top:193px;font-size:11.65px;line-height:14px;white-space:pre"><span style="color:#881391">radius</span><span style="color:#000">: </span><span style="color:#1c00cf">125</span></div>
</div>
<div class="a" style="left:1008px;top:496px;width:16px;height:199px;background:conic-gradient(#d4d0c8 25%,#fff 0 50%,#d4d0c8 0 75%,#fff 0) 0 0/2px 2px"></div>
<div class="a" style="left:1008px;top:496px;width:16px;height:16px;background:#d4d0c8;border-top:1px solid #d4d0c8;border-left:1px solid #d4d0c8;border-right:1px solid #404040;border-bottom:1px solid #404040;box-shadow:inset -1px -1px 0 #808080, inset 1px 1px 0 #fff"></div>
<div class="a" style="left:1008px;top:679px;width:16px;height:16px;background:#d4d0c8;border-top:1px solid #d4d0c8;border-left:1px solid #d4d0c8;border-right:1px solid #404040;border-bottom:1px solid #404040;box-shadow:inset -1px -1px 0 #808080, inset 1px 1px 0 #fff"></div>
<div class="a" style="left:1008px;top:520px;width:16px;height:17px;background:#d4d0c8;border-top:1px solid #d4d0c8;border-left:1px solid #d4d0c8;border-right:1px solid #404040;border-bottom:1px solid #404040;box-shadow:inset -1px -1px 0 #808080, inset 1px 1px 0 #fff"></div>
<div class="a" style="left:1011.5px;top:501px;width:0;height:0;border-left:4px solid transparent;border-right:4px solid transparent;border-bottom:4px solid #000"></div>
<div class="a" style="left:1011.5px;top:685px;width:0;height:0;border-left:4px solid transparent;border-right:4px solid transparent;border-top:4px solid #000"></div>
<div class="a" style="left:0;top:695px;width:1024px;height:27px;background:#d4d0c8"></div>
<div class="a" style="left:0;top:719px;width:1024px;height:1px;background:#fff"></div>
<div class="a" style="left:0;top:695px;width:1024px;height:24px;background:linear-gradient(#f3f4f4,#eaebeb 60%,#e6e7e7);border-top:1px solid #a8a8a8;border-bottom:1px solid #d6d2c8"></div>
<div class="a" style="left:30px;top:696px;width:1px;height:22px;background:#b8b8b8"></div>
<div class="a" style="left:61px;top:696px;width:1px;height:22px;background:#b8b8b8"></div>
<div class="a" style="left:92px;top:696px;width:1px;height:22px;background:#b8b8b8"></div>
<div class="a" style="left:131px;top:696px;width:1px;height:22px;background:#b8b8b8"></div>
<div class="a" style="left:174px;top:696px;width:1px;height:22px;background:#b8b8b8"></div>
<div class="a" style="left:175px;top:696px;width:81px;height:22px;background:#3b77d6;border-right:1px solid #5a6f90"></div>
<div class="a" style="left:100.5px;top:699.5px;font-size:11px;line-height:14px;color:#111">html</div>
<div class="a" style="left:138.5px;top:699.5px;font-size:11px;line-height:14px;color:#111">body</div>
<div class="a" style="left:182px;top:699.5px;font-size:11px;line-height:14px;color:#fff;letter-spacing:0px">canvas#odo1</div>
<svg class="a" style="left:0;top:696px" width="92" height="22" viewBox="0 0 92 22">
<g fill="#333">
<path d="M12.5,5 H23 V14 H12.5 Z M14.3,7.2 V12.5 H21.3 V7.2 Z" fill-rule="evenodd"/><path d="M7.8,9 H9.8 V14.8 H20 V16.8 H7.8 Z"/>
<path d="M39,6 L44,10.5 L39,15 L38,14 L42,10.5 L38,7 Z"/>
<rect x="45" y="6" width="8" height="1.8"/><rect x="45" y="9.6" width="8" height="1.8"/><rect x="45" y="13.2" width="8" height="1.8"/>
</g>
<circle cx="76" cy="9.5" r="4" fill="none" stroke="#333" stroke-width="1.8"/>
<path d="M79,12.5 L83,16.5" stroke="#333" stroke-width="2.2" stroke-linecap="round"/>
</svg>
<svg class="a" style="left:0;top:0;pointer-events:none" width="1024" height="722" viewBox="0 0 1024 722">
<ellipse cx="794.5" cy="544.5" rx="152" ry="54" transform="rotate(0 794.5 544.5)" fill="none" stroke="#ff4a3b" stroke-width="5"/>
</svg>
</body></html>
